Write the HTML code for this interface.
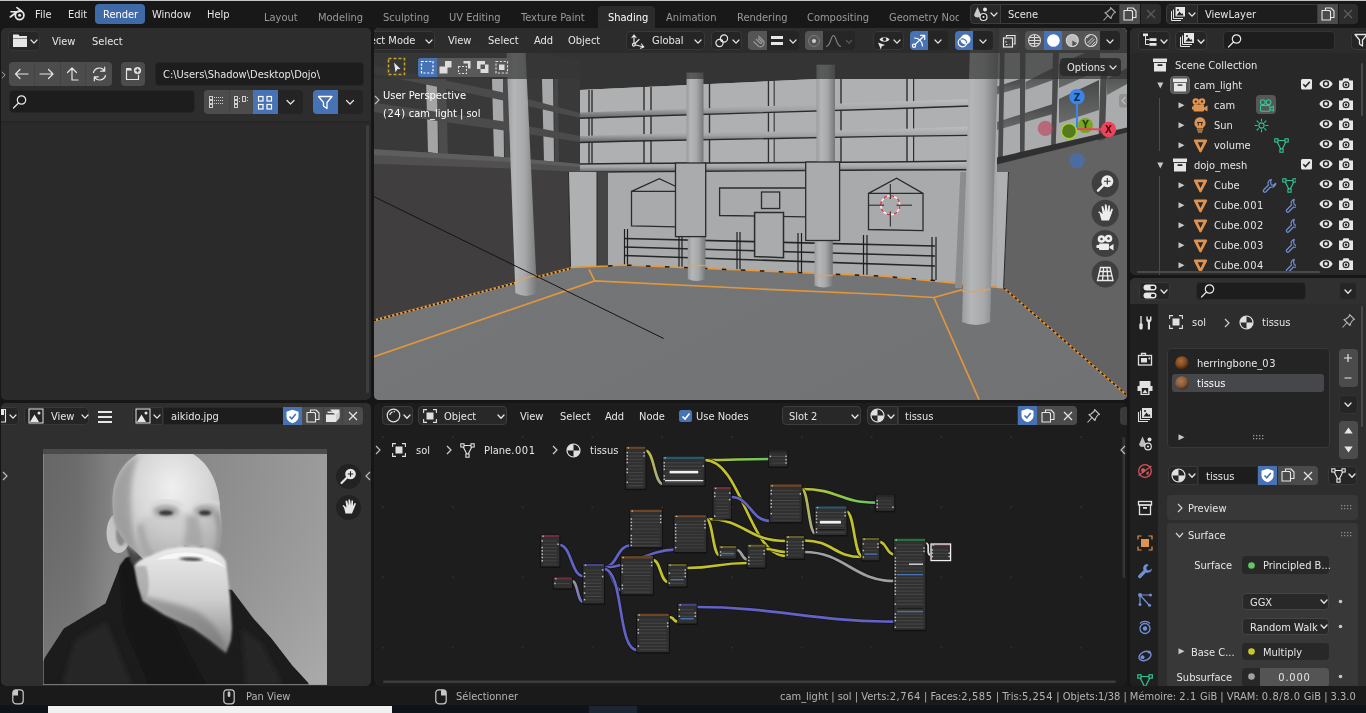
<!DOCTYPE html>
<html lang="en">
<head>
<meta charset="utf-8">
<title>Blender</title>
<style>
*{box-sizing:border-box;margin:0;padding:0}
html,body{width:1366px;height:713px;overflow:hidden;background:#161616}
body{position:relative;font-family:"DejaVu Sans Condensed","DejaVu Sans","Liberation Sans",sans-serif;font-stretch:condensed;font-size:11px;line-height:14px;color:#e6e6e6}
.a{position:absolute}
.t{position:absolute;white-space:nowrap;color:#e6e6e6;line-height:16px;height:16px;will-change:transform}
.dim{color:#9a9a9a}
.dg{letter-spacing:.58px}
.panel{position:absolute;overflow:hidden;border-radius:5px}
.btn{position:absolute;background:#545454;border-radius:3px}
.fld{position:absolute;background:#1d1d1d;border-radius:3px;border:1px solid #3d3d3d}
.dd{position:absolute;background:#282828;border-radius:3px;border:1px solid #3d3d3d}
.sel{background:#4772b3}
svg{position:absolute;overflow:visible}
.ic{fill:none;stroke:#e6e6e6;stroke-width:1.2;stroke-linecap:round;stroke-linejoin:round}
</style>
</head>
<body>
<!-- top bar -->
<div class="a" id="topbar" style="left:0;top:0;width:1366px;height:28px;background:#181818"></div>
<!-- file browser -->
<!-- 3d viewport -->
<!-- outliner -->
<!-- properties -->
<!-- image editor -->
<!-- node editor -->
<!-- status bar -->
<!-- taskbar strip -->
<!-- ============ TOP BAR ============ -->
<div class="a" style="left:0;top:0;width:1366px;height:1px;background:#c4c4c4"></div>
<svg width="16" height="16" viewBox="0 0 16 16" style="left:9px;top:6px"><g fill="none" stroke="#e6e6e6" stroke-linecap="round"><circle cx="10.6" cy="9.3" r="4.3" stroke-width="1.8"/><path d="M2,5.8H10M7.9,1.6L12.6,5.2M1.3,11L7,6.5" stroke-width="1.6"/></g><circle cx="10.6" cy="9.3" r="1.5" fill="#e6e6e6"/></svg>
<div class="t" style="left:35px;top:7px">File</div>
<div class="t" style="left:68px;top:7px">Edit</div>
<div class="a sel" style="left:95px;top:4px;width:50px;height:20px;border-radius:4px;background:#3f6aa8"></div>
<div class="t" style="left:102.5px;top:7px;color:#fff">Render</div>
<div class="t" style="left:152px;top:7px">Window</div>
<div class="t" style="left:207px;top:7px">Help</div>
<!-- workspace tabs -->
<div class="t dim" style="left:264px;top:10px">Layout</div>
<div class="t dim" style="left:318px;top:10px">Modeling</div>
<div class="t dim" style="left:383px;top:10px">Sculpting</div>
<div class="t dim" style="left:449px;top:10px">UV Editing</div>
<div class="t dim" style="left:521px;top:10px">Texture Paint</div>
<div class="a" style="left:598px;top:6px;width:57px;height:22px;background:#2b2b2b;border-radius:4px 4px 0 0"></div>
<div class="t" style="left:607.5px;top:10px;color:#fff">Shading</div>
<div class="t dim" style="left:666px;top:10px">Animation</div>
<div class="t dim" style="left:737px;top:10px">Rendering</div>
<div class="t dim" style="left:807px;top:10px">Compositing</div>
<div class="a" style="left:889px;top:10px;width:70px;height:16px;overflow:hidden"><div class="t dim" style="left:0;top:0">Geometry Nodes</div></div>
<!-- scene selector -->
<div class="dd" style="left:970px;top:4px;width:31px;height:20px;border-radius:4px 0 0 4px"></div>
<div class="fld" style="left:1000px;top:4px;width:120px;height:20px;border-radius:0"></div>
<div class="btn" style="left:1120px;top:4px;width:20px;height:20px;border-radius:0;background:#4b4b4b"></div>
<div class="btn" style="left:1140.5px;top:4px;width:20px;height:20px;border-radius:0 4px 4px 0;background:#2d2d2d"></div>
<div class="t" style="left:1008px;top:7px">Scene</div>
<!-- view layer selector -->
<div class="dd" style="left:1166px;top:4px;width:32px;height:20px;border-radius:4px 0 0 4px"></div>
<div class="fld" style="left:1197px;top:4px;width:121px;height:20px;border-radius:0"></div>
<div class="btn" style="left:1318px;top:4px;width:20px;height:20px;border-radius:0;background:#4b4b4b"></div>
<div class="btn" style="left:1338.5px;top:4px;width:19px;height:20px;border-radius:0 4px 4px 0;background:#2d2d2d"></div>
<div class="t" style="left:1205px;top:7px">ViewLayer</div>
<!-- topbar icons -->
<svg width="16" height="16" viewBox="0 0 16 16" style="left:973px;top:6px"><path d="M4.500,1L8,9A3.700,3.700 0 0 1 1,9Z" fill="#c9c9c9"/><circle cx="12" cy="3.500" r="2" fill="#e6e6e6"/><circle cx="10.500" cy="11" r="3.500" fill="#181818" stroke="#e6e6e6" stroke-width="1.200"/><circle cx="10.500" cy="11" r="1.100" fill="#e6e6e6"/></svg>
<svg width="8" height="6" viewBox="0 0 8 6" style="left:990px;top:11.500px"><path d="M1,1L4,4.2 7,1" class="ic" stroke-width="1.300"/></svg>
<svg width="15" height="16" viewBox="0 0 15 16" style="left:1101.500px;top:5.500px"><path d="M8.500,1.500L13.500,6.500 11.800,7 9.500,10.500 9,12.500 3,6.500 5,6 8.300,3.300Z M6,9.500L1.500,14.500" fill="none" stroke="#a8a8a8" stroke-width="1.100" stroke-linejoin="round"/></svg>
<svg width="14" height="14" viewBox="0 0 14 14" style="left:1123px;top:7px"><path d="M4.500,3.500V1H10L13,4V10.500H9.500M9.500,4.500V13H1V3.500H8.500Z" fill="none" stroke="#e6e6e6" stroke-width="1.100" stroke-linejoin="round"/></svg>
<svg width="10" height="10" viewBox="0 0 10 10" style="left:1145.500px;top:9px"><path d="M1,1L9,9M9,1L1,9" stroke="#5e5e5e" stroke-width="1.200" fill="none"/></svg>
<svg width="16" height="16" viewBox="0 0 16 16" style="left:1170px;top:6px"><g fill="none" stroke="#e6e6e6" stroke-width="1"><path d="M1.500,5V14.500H11M3.500,3.500V12.500H13"/></g><rect x="5.500" y="1" width="9.500" height="9.500" fill="#e6e6e6"/><path d="M6.500,9.500L9.500,5.500 11.500,8 12.500,7 13.500,9.500Z" fill="#252525"/><circle cx="8" cy="4" r="1" fill="#252525"/></svg>
<svg width="8" height="6" viewBox="0 0 8 6" style="left:1188px;top:11.500px"><path d="M1,1L4,4.2 7,1" class="ic" stroke-width="1.300"/></svg>
<svg width="14" height="14" viewBox="0 0 14 14" style="left:1321px;top:7px"><path d="M4.500,3.500V1H10L13,4V10.500H9.500M9.500,4.500V13H1V3.500H8.500Z" fill="none" stroke="#e6e6e6" stroke-width="1.100" stroke-linejoin="round"/></svg>
<svg width="10" height="10" viewBox="0 0 10 10" style="left:1343px;top:9px"><path d="M1,1L9,9M9,1L1,9" stroke="#5e5e5e" stroke-width="1.200" fill="none"/></svg>
<!-- ============ FILE BROWSER ============ -->
<div class="panel" id="fb" style="left:1px;top:28px;width:370px;height:372px;background:#2a2a2a">
<div class="a" style="left:0;top:0;width:370px;height:94px;background:#2d2d2d"></div>
<div class="a" style="left:0;top:93px;width:370px;height:2px;background:#262626"></div>
<!-- editor type -->
<div class="dd" style="left:7px;top:3px;width:32px;height:20px;border-radius:4px;background:#272727;border-color:#353535"></div>
<svg width="14" height="13" viewBox="0 0 14 13" style="left:12px;top:6px"><path d="M0,0.5H5.5L6.5,2H14V4H0Z M0,4.6H14V13H0Z" fill="#e6e6e6"/></svg>
<svg width="8" height="6" viewBox="0 0 8 6" style="left:29px;top:11px"><path d="M1,1L4,4.2 7,1" class="ic" stroke-width="1.3"/></svg>
<div class="t" style="left:51px;top:6px">View</div>
<div class="t" style="left:91px;top:6px">Select</div>
<!-- nav buttons -->
<div class="btn" style="left:8px;top:34px;width:103px;height:24px;border-radius:4px;background:#4c4c4c"></div>
<div class="a" style="left:33px;top:34px;width:1px;height:24px;background:#444"></div>
<div class="a" style="left:58.5px;top:34px;width:1px;height:24px;background:#444"></div>
<div class="a" style="left:84px;top:34px;width:1px;height:24px;background:#444"></div>
<svg width="103" height="24" viewBox="0 0 103 24" style="left:8px;top:34px"><g class="ic" stroke-width="1.3">
<path d="M19,12H6.5M11,7.5L6.5,12 11,16.500"/>
<path d="M31,12H44M39.500,7.500L44,12 39.500,16.500"/>
<path d="M69,18H63V6M58.500,10.500L63,6 67.500,10.500"/>
<path d="M84.500,10.500A6,6 0 0 1 95.500,9M95.700,5.200V9.200H91.700M96.500,13.500A6,6 0 0 1 85.500,15M85.300,18.800V14.800H89.300"/>
</g></svg>
<div class="btn" style="left:120px;top:34px;width:24px;height:24px;border-radius:4px;background:#4c4c4c"></div>
<svg width="24" height="24" viewBox="0 0 24 24" style="left:120px;top:34px"><path d="M5.500,8.500V17.500H17.500V13" class="ic" stroke-width="1.3"/><path d="M5,6H10L11,8.500H5Z" fill="#e6e6e6"/><circle cx="16.500" cy="8.500" r="3.600" fill="#e6e6e6"/><path d="M14.500,8.500H18.500M16.500,6.500V10.500" stroke="#4c4c4c" stroke-width="1.300"/></svg>
<!-- path -->
<div class="fld" style="left:154px;top:34px;width:209px;height:24px;border-radius:4px;border-color:#262626"></div>
<div class="t" style="left:161.5px;top:39px">C:\Users\Shadow\Desktop\Dojo\</div>
<!-- search -->
<div class="fld" style="left:8px;top:62px;width:186px;height:23px;border-radius:4px;border-color:#262626"></div>
<svg width="16" height="16" viewBox="0 0 16 16" style="left:11px;top:66px"><circle cx="9.500" cy="6" r="4.200" class="ic" stroke-width="1.300"/><path d="M6.500,9L1.500,14" class="ic" stroke-width="1.400"/></svg>
<!-- view modes -->
<div class="btn" style="left:203px;top:62px;width:74px;height:24px;border-radius:4px 0 0 4px;background:#4c4c4c"></div>
<div class="a" style="left:227.500px;top:62px;width:1px;height:24px;background:#444"></div>
<div class="a sel" style="left:252px;top:62px;width:25px;height:24px"></div>
<div class="a" style="left:277px;top:62px;width:25px;height:24px;background:#242424;border-radius:0 4px 4px 0"></div>
<svg width="100" height="24" viewBox="0 0 100 24" style="left:203px;top:62px">
<g fill="none" stroke="#d0d0d0" stroke-width="1"><rect x="5.500" y="6.500" width="3" height="3"/><rect x="5.500" y="10.500" width="3" height="3"/><rect x="5.500" y="14.500" width="3" height="3"/><rect x="30.500" y="6.500" width="3" height="3"/><rect x="30.500" y="10.500" width="3" height="3"/><rect x="30.500" y="14.500" width="3" height="3"/><rect x="38.500" y="6.500" width="3" height="5"/></g>
<g stroke="#d0d0d0" stroke-width="1" stroke-dasharray="1 1"><path d="M10,7.500H19M10,10.500H19M10,13.500H19M35,8.500H37M35,11.500H37M43,7.500H45M43,10.500H45"/></g>
<g fill="none" stroke="#fff" stroke-width="1.200"><rect x="54.500" y="6.500" width="4.500" height="4.500"/><rect x="63" y="6.500" width="4.500" height="4.500"/><rect x="54.500" y="14.500" width="4.500" height="4.500"/><rect x="63" y="14.500" width="4.500" height="4.500"/></g>
<path d="M83,10.500L86.500,14 90,10.500" class="ic" stroke-width="1.400"/>
</svg>
<!-- filter -->
<div class="a sel" style="left:312px;top:62px;width:24.500px;height:24px;border-radius:4px 0 0 4px"></div>
<div class="a" style="left:336.500px;top:62px;width:25.500px;height:24px;background:#242424;border-radius:0 4px 4px 0"></div>
<svg width="50" height="24" viewBox="0 0 50 24" style="left:312px;top:62px"><path d="M5.500,6.500H19L14,12.500V18.500L10.500,16V12.500Z" fill="none" stroke="#fff" stroke-width="1.300" stroke-linejoin="round"/><path d="M33.500,10.500L37,14 40.500,10.500" class="ic" stroke-width="1.400"/></svg>
<!-- scrollbar -->
<div class="a" style="left:365px;top:97px;width:3px;height:268px;background:#3e3e3e;border-radius:2px"></div>
<!-- region toggle -->
<svg width="5" height="8" viewBox="0 0 6 10" style="left:0px;top:43px"><path d="M1,1L5,5 1,9" fill="none" stroke="#aaa" stroke-width="1.200"/></svg>
</div>
<!-- ============ 3D VIEWPORT ============ -->
<div class="panel" id="vp" style="left:374px;top:28px;width:753px;height:372px;background:#747576">
<svg width="753" height="372" viewBox="374 28 753 372" style="left:0;top:0">
<defs>
<linearGradient id="pil" x1="0" x2="1" y1="0" y2="0"><stop offset="0" stop-color="#9a9c9d"/><stop offset=".25" stop-color="#b4b6b7"/><stop offset=".6" stop-color="#a6a8a9"/><stop offset="1" stop-color="#747677"/></linearGradient>
<linearGradient id="rail" x1="0" x2="0" y1="0" y2="1"><stop offset="0" stop-color="#bcbebf"/><stop offset=".55" stop-color="#a2a4a5"/><stop offset="1" stop-color="#5e6061"/></linearGradient>
<linearGradient id="flr" x1="0" x2="1" y1="0" y2="1"><stop offset="0" stop-color="#777879"/><stop offset="1" stop-color="#717273"/></linearGradient>
</defs>
<!-- floor -->
<rect x="374" y="28" width="753" height="372" fill="url(#flr)"/>
<!-- ceiling -->
<polygon points="374,28 1127,28 1127,80 816,80 580,90 374,60" fill="#343434"/>
<!-- left wall -->
<polygon points="374,28 580,90 580,172 570,268 374,320.5" fill="#403e3e"/>
<polygon points="374,28 580,60 580,172 374,150" fill="#3a3939"/>
<!-- left wall light strips -->
<polygon points="426,79 437,79 438,154 428,152" fill="#a2a4a5"/>
<polygon points="492,79 503,79 504,158 494,157" fill="#a6a8a9"/>
<polygon points="542,79 553,79 554,163 544,162" fill="#a6a8a9"/>
<!-- left wall posts -->
<polygon points="437.5,79 446,79 448,160 439,160" fill="#4c4c4c"/>
<polygon points="503,79 508,79 510,162 505,160" fill="#4a4a4a"/>
<polygon points="554,79 558,79 559,166 555,165" fill="#474747"/>
<!-- left wall beams -->
<polygon points="374,65.5 501,92 580,113 580,118 501,100 374,73.7" fill="#4b4b4b"/>
<polygon points="374,102.8 501,121 580,136 580,142 501,130 374,112" fill="#4b4b4b"/>
<polygon points="374,149.3 510,157.5 580,164 580,172 510,168.4 374,163.8" fill="#505050"/>
<polygon points="374,149.3 510,157.5 580,164 580,167 510,162 374,155" fill="#5e5e5e"/>
<!-- back wall -->
<polygon points="580,90 816,79 1010,79 1010,288 884,276.3 624,265 608,266 608,172 580,172" fill="#a8aaab"/>
<polygon points="580,90 816,79 970,79 970,161 884,162 624,163.5 580,164" fill="#aeb0b1"/>
<!-- back-wall window mullions -->
<g stroke="#2f2f2f" stroke-width="1.4" fill="none">
<path d="M589,90V165M592,90V165M644,87V164M651,87V164M709.5,84V163M768.5,81V163M774,81V163M841,79V162M907,79V161M913.5,79V161"/>
</g>
<g fill="#b4b6b7"><rect x="645" y="87" width="5" height="77"/><rect x="769.5" y="81" width="4" height="82"/><rect x="908" y="79" width="5" height="82"/></g>
<!-- rails -->
<polygon points="580,112.5 624,111 884,102 970,99 970,106 884,109 624,116.8 580,118.3" fill="url(#rail)"/>
<polygon points="580,136 624,134.4 884,129.5 970,126.6 970,135.4 884,136.4 624,141.3 580,142.5" fill="url(#rail)"/>
<polygon points="580,164 624,163.5 884,162 970,161 970,169.8 884,170 624,171.8 580,172.3" fill="url(#rail)"/>
<g stroke="#2a2a2a" stroke-width="1.400" fill="none"><path d="M580,118.3L624,116.8 884,109 970,106M580,142.5L624,141.3 884,136.4 970,135.4M580,172.3L624,171.8 884,170 970,169.8M580,164L624,163.5 884,162 970,161"/></g>
<!-- left near panel -->
<polygon points="568.5,172 597,172 597,266.5 570.5,267" fill="#aeb0b1"/>
<polygon points="597,172 608,172 608,266 597,266.5" fill="#454545"/>
<path d="M568.5,172L570.5,267M597,172V266.5" stroke="#2a2a2a" stroke-width="1" fill="none"/>
<!-- wall decorations -->
<g stroke="#2b2b2b" stroke-width="1.3" fill="none" stroke-linejoin="miter">
<path d="M631.5,191.4H676V226.8L631.5,225.8ZM631.5,191.4L659.3,178.7 676,186.5"/>
<path d="M719.6,188H806V216.8L719.6,215.5Z"/>
<rect x="761.5" y="192" width="18.2" height="16.5"/>
<path d="M868.5,193.4H923V230.7L868.5,229.5ZM868.5,193.4L896.6,178.3 923,193.4"/>
</g>
<!-- fence -->
<g stroke="#262626" stroke-width="1.6" fill="none">
<path d="M624,238.5L935,246M624,247L935,256M624,255.5L935,266"/>
</g>
<g stroke="#1e1e1e" stroke-width="1.2" fill="none">
<path d="M624.5,229V266M627.5,229V266M679,236V268M682,236V268M737,232V270.5M740,232V270.5M798,233V273M801.5,233V273M863.5,235V276M867,235V276M932,237V280M936,237V280"/>
</g>
<path d="M754.6,212.6H783.5V257.8L754.6,256.5Z" fill="#a9abac" stroke="#2b2b2b" stroke-width="1.5"/>
<!-- floor/wall boundary lines -->
<path d="M570.5,267.5L608,266 624,265 884,276.3 1004,288" stroke="#e8973a" stroke-width="1.500" fill="none"/>
<path d="M608,266L624,265 884,276.3 940,281" stroke="#1a1a1a" stroke-width="1.500" stroke-dasharray="4.500 14.500" fill="none"/>
<!-- back pillars + boxes -->
<rect x="686.5" y="72.6" width="17" height="92" fill="url(#pil)"/>
<rect x="816.5" y="64.7" width="18.5" height="99" fill="url(#pil)"/>
<path d="M687.8,236H705.5V279Q696.6,283 687.8,279Z" fill="url(#pil)"/>
<path d="M814.5,240H832.8V285.5Q823.6,289.5 814.5,285.5Z" fill="url(#pil)"/>
<path d="M687.8,265.5H705.5M814.5,275.5H832.8" stroke="#e8a05a" stroke-width="1.5" opacity=".8"/>
<rect x="675.5" y="163" width="30.2" height="73.6" fill="#a9abac" stroke="#2b2b2b" stroke-width="1.3"/>
<rect x="805.7" y="162" width="33.9" height="78.5" fill="#a9abac" stroke="#2b2b2b" stroke-width="1.3"/>
<!-- right wall -->
<polygon points="997,28 1127,28 1127,140 997,172" fill="#a9abac"/>
<polygon points="997,164 1127,132 1127,394.7 1003.6,287.7 1008.5,172 997,172" fill="#636363"/>
<polygon points="997,172 1008.5,172 1003.6,287.7 997,288" fill="#aeb0b1"/>
<path d="M1008.5,172L1003.6,287.7" stroke="#2a2a2a" stroke-width="1"/>
<!-- right wall beams -->
<defs><linearGradient id="bm" x1="0" x2="0" y1="0" y2="1"><stop offset="0" stop-color="#474848"/><stop offset="1" stop-color="#6a6b6b"/></linearGradient></defs>
<g fill="url(#bm)">
<polygon points="997,122 1053,104 1053,114 997,130"/>
<polygon points="1059,99 1099,80 1099,110 1059,123"/>
<polygon points="1107,79 1127,68 1127,84 1107,95"/>
<polygon points="997,86.500 1020,79 1020,88 997,94.600"/>
<polygon points="1025.500,82 1053,68 1053,80 1025.500,90"/>
<polygon points="1059,64 1085,53 1100,53 1100,70 1059,88"/>
</g>
<g fill="#4a4b4c">
<polygon points="1000,53 1004.6,53 1002.8,159 998,160"/>
<polygon points="1020,53 1025.5,53 1024.5,155.5 1020,156.6"/>
<polygon points="1053,53 1059,53 1055.6,149 1051,150"/>
<polygon points="1101,60 1107.6,60 1104.8,139.5 1098.5,141"/>
</g>
<polygon points="997,157.5 1127,127.5 1127,132.5 997,164.5" fill="#303030"/>
<!-- right wall floor boundary -->
<path d="M1003.6,287.7L1126.4,394.7" stroke="#e8912d" stroke-width="2"/>
<path d="M1003.6,287.7L1126.4,394.7" stroke="#1a1a1a" stroke-width="1.500" stroke-dasharray="2.500 2.500"/>
<!-- strip behind big pillar -->
<polygon points="960.4,172 966.3,172 962,288 955,288" fill="#8a8c8d"/>
<!-- floor orange lines -->
<g stroke="#e0963f" stroke-width="1.700" fill="none" stroke-linejoin="round">
<path d="M374,356.6L594.7,280.9 760,289 884,294.5 933.9,297.5 979,399.6"/>
<path d="M589,269.4L594.7,280.9M933.9,297.5L962.4,289.6"/>
</g>
<!-- left wall floor boundary -->
<path d="M374,320.5L570.4,268.4" stroke="#eaa040" stroke-width="2.2"/>
<path d="M374,320.5L570.4,268.4" stroke="#1a1a1a" stroke-width="1.8" stroke-dasharray="2 2.200"/>
<!-- pillar 1 -->
<path d="M506.5,53L525.6,53 537,293Q526,299 515.4,293Z" fill="url(#pil)"/>
<path d="M515,281L537,275" stroke="#e8a05a" stroke-width="1.5" opacity=".7"/>
<!-- black line -->
<path d="M374,196.7L663.7,338.5" stroke="#151515" stroke-width="1"/>
<!-- pillar C -->
<path d="M970.5,28L999,28 990,322Q976,328 962,322Z" fill="url(#pil)"/>
<path d="M962,291Q976,293 990,289" stroke="#e8a05a" stroke-width="1.5" opacity=".8" fill="none"/>
<!-- header overlays -->
<rect x="374" y="53" width="753" height="26" fill="#353535" opacity=".7"/>
<rect x="374" y="28" width="753" height="25" fill="#2b2b2b" opacity=".88"/>
</svg>
</div>
<!-- ============ 3D VIEWPORT HEADER / OVERLAYS ============ -->
<div class="a" id="vph" style="left:374px;top:28px;width:753px;height:372px;overflow:hidden;border-radius:5px">
<!-- mode dropdown (clipped) -->
<div class="dd" style="left:-40px;top:3px;width:101px;height:19px;border-radius:4px;background:#252525;border-color:#383838"></div>
<div class="t" style="left:-21.5px;top:5px">Object Mode</div>
<svg width="8" height="6" viewBox="0 0 8 6" style="left:51px;top:10.500px"><path d="M1,1L4,4.2 7,1" class="ic" stroke-width="1.3"/></svg>
<div class="t" style="left:74px;top:5px">View</div>
<div class="t" style="left:114px;top:5px">Select</div>
<div class="t" style="left:160px;top:5px">Add</div>
<div class="t" style="left:194px;top:5px">Object</div>
<!-- orientation -->
<div class="dd" style="left:251.5px;top:3px;width:79px;height:19px;border-radius:4px;background:#252525;border-color:#383838"></div>
<svg width="16" height="16" viewBox="0 0 16 16" style="left:256px;top:5px"><g class="ic" stroke-width="1.1"><path d="M4,2V11.500L13.500,14M2,4.500L4,2 6,4.500M11.500,11L13.800,14 10.500,15.200M4,11.500L9,6.500"/><circle cx="3.800" cy="11.800" r="1.400" fill="#252525"/></g></svg>
<div class="t" style="left:277.5px;top:5px">Global</div>
<svg width="8" height="6" viewBox="0 0 8 6" style="left:320px;top:10.500px"><path d="M1,1L4,4.2 7,1" class="ic" stroke-width="1.3"/></svg>
<!-- pivot -->
<div class="dd" style="left:337px;top:3px;width:31px;height:19px;border-radius:4px;background:#252525;border-color:#383838"></div>
<svg width="16" height="16" viewBox="0 0 16 16" style="left:340px;top:5px"><g class="ic" stroke-width="1.200"><circle cx="5.500" cy="10" r="3.600"/><circle cx="10" cy="5.500" r="3.600"/></g><circle cx="7.800" cy="7.800" r="1.300" fill="#e6e6e6"/></svg>
<svg width="8" height="6" viewBox="0 0 8 6" style="left:357.500px;top:10.500px"><path d="M1,1L4,4.2 7,1" class="ic" stroke-width="1.3"/></svg>
<!-- snap -->
<div class="a" style="left:374px;top:3px;width:18.500px;height:19px;background:#555;border-radius:4px 0 0 4px"></div>
<svg width="16" height="16" viewBox="0 0 16 16" style="left:375.500px;top:5px"><path d="M3.500,8.500L8.800,13.500A3.800,3.800 0 0 0 13.500,8L8.500,3M6,6L10.500,10.500A1.400,1.400 0 0 0 12,9L8,5" fill="none" stroke="#9a9a9a" stroke-width="1.100" stroke-linejoin="round"/></svg>
<div class="a" style="left:392.500px;top:3px;width:32px;height:19px;background:#252525;border-radius:0 4px 4px 0"></div>
<div class="a" style="left:397px;top:8px;width:12px;height:3px;background:#e6e6e6"></div>
<div class="a" style="left:397px;top:14px;width:12px;height:3px;background:#e6e6e6"></div>
<svg width="8" height="6" viewBox="0 0 8 6" style="left:414.500px;top:10.500px"><path d="M1,1L4,4.2 7,1" class="ic" stroke-width="1.3"/></svg>
<!-- proportional -->
<div class="a" style="left:430.800px;top:3px;width:18.500px;height:19px;background:#555;border-radius:4px 0 0 4px"></div>
<svg width="16" height="16" viewBox="0 0 16 16" style="left:432px;top:5px"><circle cx="8" cy="8" r="5.500" fill="none" stroke="#7c7c7c" stroke-width="1"/><circle cx="8" cy="8" r="2" fill="#cfcfcf"/></svg>
<div class="a" style="left:449.300px;top:3px;width:32px;height:19px;background:#262626;border-radius:0 4px 4px 0"></div>
<svg width="18" height="16" viewBox="0 0 18 16" style="left:451px;top:5px"><path d="M1,13.500C6,13.500 5.500,2.500 8.500,2.500S11,13.500 16,13.500" fill="none" stroke="#8a8a8a" stroke-width="1.100"/></svg>
<svg width="8" height="6" viewBox="0 0 8 6" style="left:470.500px;top:10.500px"><path d="M1,1L4,4.2 7,1" fill="none" stroke="#555" stroke-width="1.300"/></svg>
<!-- visibility -->
<div class="dd" style="left:498.500px;top:3px;width:31px;height:19px;border-radius:4px;background:#252525;border-color:#383838"></div>
<svg width="18" height="18" viewBox="0 0 18 18" style="left:500.500px;top:5px"><path d="M4.500,6.500C6.500,3.500 12.500,3.500 14.500,6.500C12.500,9.500 6.500,9.500 4.500,6.500Z" fill="#e6e6e6"/><circle cx="9.500" cy="6.300" r="1.700" fill="#252525"/><path d="M3,9.500L10,12 6.800,13.200 5.800,16.500Z" fill="#e6e6e6"/></svg>
<svg width="8" height="6" viewBox="0 0 8 6" style="left:519px;top:10.500px"><path d="M1,1L4,4.2 7,1" class="ic" stroke-width="1.3"/></svg>
<!-- gizmo -->
<div class="a sel" style="left:536px;top:3px;width:18.300px;height:19px;border-radius:4px 0 0 4px"></div>
<svg width="16" height="16" viewBox="0 0 16 16" style="left:537px;top:5px"><g fill="none" stroke="#fff" stroke-width="1.200" stroke-linecap="round" stroke-linejoin="round"><path d="M3,12.500L13.500,2.500M9.500,2.300H13.700V6.500M3.500,5C8,5 11.500,8.500 11.500,13"/><circle cx="3" cy="12.800" r="1.600" fill="#4772b3"/></g></svg>
<div class="a" style="left:554.300px;top:3px;width:19.700px;height:19px;background:#252525;border-radius:0 4px 4px 0"></div>
<svg width="8" height="6" viewBox="0 0 8 6" style="left:560px;top:10.500px"><path d="M1,1L4,4.2 7,1" class="ic" stroke-width="1.3"/></svg>
<!-- overlay -->
<div class="a sel" style="left:581px;top:3px;width:18.300px;height:19px;border-radius:4px 0 0 4px"></div>
<svg width="16" height="16" viewBox="0 0 16 16" style="left:582px;top:5px"><circle cx="9.500" cy="6.500" r="5" fill="#fff"/><circle cx="6.500" cy="9.500" r="4.300" fill="none" stroke="#fff" stroke-width="1.200"/><path d="M5,6.200A4.300,4.300 0 0 1 10.700,10.300" fill="none" stroke="#4772b3" stroke-width="1.200"/></svg>
<div class="a" style="left:599.300px;top:3px;width:19.700px;height:19px;background:#252525;border-radius:0 4px 4px 0"></div>
<svg width="8" height="6" viewBox="0 0 8 6" style="left:605px;top:10.500px"><path d="M1,1L4,4.2 7,1" class="ic" stroke-width="1.3"/></svg>
<!-- xray -->
<div class="a" style="left:626px;top:3px;width:18.500px;height:19px;background:#3f3f3f;border-radius:4px"></div>
<svg width="16" height="16" viewBox="0 0 16 16" style="left:627.200px;top:5px"><g fill="none" stroke="#e6e6e6" stroke-width="1.200"><path d="M5.500,4V2.500H14V11H12.500"/><rect x="2.500" y="5" width="9" height="9" fill="#3f3f3f"/></g><path d="M5,8V9.500M5,11.500H6.500M8.500,11.500H9" stroke="#e6e6e6" stroke-width="1.100"/></svg>
<!-- shading modes -->
<div class="a" style="left:650.700px;top:3px;width:75.500px;height:19px;background:#555;border-radius:4px 0 0 4px"></div>
<div class="a sel" style="left:670px;top:3px;width:18.300px;height:19px"></div>
<svg width="76" height="19" viewBox="0 0 76 19" style="left:650.700px;top:3px">
<g fill="none" stroke="#d8d8d8" stroke-width="1.100"><circle cx="9.500" cy="9.500" r="6"/><path d="M3.500,9.500H15.500M9.500,3.500V15.500M4.500,6.500H14.500M4.500,12.500H14.500"/></g>
<circle cx="28.400" cy="9.500" r="6.300" fill="#fff"/>
<circle cx="47.300" cy="9.500" r="6" fill="none" stroke="#d8d8d8" stroke-width="1.100"/><path d="M47.300,3.500A6,6 0 0 0 47.300,15.500L47.300,9.500 52.500,12.500A6,6 0 0 0 47.300,3.500Z" fill="#cfcfcf" opacity=".85"/>
<circle cx="66" cy="9.500" r="6" fill="none" stroke="#d8d8d8" stroke-width="1.100"/><path d="M62,7A4.500,4.500 0 0 1 65,4.500M69.500,8L64,13.500M70.500,10.500L66.500,14.500M68,6.500L62.500,12" fill="none" stroke="#d8d8d8" stroke-width="1"/>
</g></svg>
<div class="a" style="left:726.200px;top:3px;width:20px;height:19px;background:#252525;border-radius:0 4px 4px 0"></div>
<svg width="8" height="6" viewBox="0 0 8 6" style="left:732px;top:10.500px"><path d="M1,1L4,4.2 7,1" class="ic" stroke-width="1.3"/></svg>
<!-- tool settings row -->
<svg width="20" height="20" viewBox="0 0 20 20" style="left:13px;top:29px"><rect x="1.500" y="1.500" width="16" height="16" fill="none" stroke="#c9a227" stroke-width="1.600" stroke-dasharray="3 2"/><path d="M7,5.500L13.500,12 10.200,12.300 8.500,15.500Z" fill="#e6e6e6"/></svg>
<div class="a" style="left:44px;top:30px;width:93.300px;height:18.500px;background:#595959;border-radius:3px"></div>
<div class="a sel" style="left:44px;top:30px;width:18.600px;height:18.500px;border-radius:3px 0 0 3px"></div>
<svg width="94" height="19" viewBox="0 0 94 19" style="left:44px;top:30px">
<rect x="3.500" y="3.500" width="11.500" height="11.500" fill="none" stroke="#fff" stroke-width="1.200" stroke-dasharray="2.200 1.600"/>
<path d="M27,3H33.500V9.500H29.500V15.500H21.500V8.500H27Z" fill="#dcdcdc"/>
<rect x="40.500" y="8.500" width="8" height="7" fill="none" stroke="#dcdcdc" stroke-width="1.100" stroke-dasharray="2 1.500"/><path d="M45.500,3H52.500V10.500H50V5.500H45.500Z" fill="#dcdcdc"/>
<path d="M59,3H67V11H59Z" fill="#dcdcdc"/><rect x="62.500" y="6.500" width="8" height="8.500" fill="#dcdcdc"/><rect x="62.500" y="6.500" width="4.500" height="4.500" fill="#595959"/>
<rect x="78" y="3.500" width="11.500" height="11.500" fill="none" stroke="#dcdcdc" stroke-width="1.100" stroke-dasharray="2.200 1.600"/><rect x="81" y="6.500" width="5.500" height="5.500" fill="#dcdcdc"/>
</svg>
<g></g>
<!-- text overlay -->
<div class="t" style="left:9px;top:60px;color:#fff">User Perspective</div>
<div class="t" style="left:9px;top:78px;color:#fff"><span class="dg">(24)</span> cam_light | sol</div>
<svg width="6" height="10" viewBox="0 0 6 10" style="left:0px;top:67px"><path d="M1,1L5,5 1,9" fill="none" stroke="#bbb" stroke-width="1.200"/></svg>
<!-- options -->
<div class="a" style="left:685.500px;top:30px;width:61px;height:18px;background:#2a2a2a;border-radius:4px;opacity:.92"></div>
<div class="t" style="left:693px;top:32px">Options</div>
<svg width="8" height="6" viewBox="0 0 8 6" style="left:735px;top:37px"><path d="M1,1L4,4.2 7,1" class="ic" stroke-width="1.3"/></svg>
<!-- gizmo, nav buttons, cursor (page coords via viewBox) -->
<svg width="753" height="372" viewBox="374 28 753 372" style="left:0;top:0">
<!-- 3d cursor -->
<g fill="none">
<circle cx="890.300" cy="205.200" r="9.500" stroke="#f2f2f2" stroke-width="1.600"/>
<circle cx="890.300" cy="205.200" r="9.500" stroke="#e0344a" stroke-width="1.600" stroke-dasharray="3.700 3.760"/>
<path d="M869,205.200H884M896.500,205.200H912M890.300,184V199M890.300,211.500V226.500" stroke="#222" stroke-width="1"/>
</g>
<!-- gizmo -->
<circle cx="1045.400" cy="128.400" r="7.700" fill="#c2415a" opacity=".62"/>
<circle cx="1077" cy="160.600" r="7.700" fill="#3f74c8" opacity=".62"/>
<circle cx="1085.400" cy="125.600" r="7.500" fill="#76a81f"/>
<path d="M1077,129V97" stroke="#3a86e8" stroke-width="2"/>
<path d="M1077,129L1108.500,129.500" stroke="#f0425a" stroke-width="2"/>
<circle cx="1069" cy="131.200" r="7.600" fill="#567a1d" stroke="#9fd62c" stroke-width="1.500"/>
<circle cx="1077" cy="96.800" r="7.700" fill="#3a86e8"/>
<circle cx="1108.500" cy="129.500" r="7.700" fill="#f0425a"/>
<g font-family="DejaVu Sans, Liberation Sans, sans-serif" font-size="10" font-weight="bold" fill="#1a1a1a" text-anchor="middle">
<text x="1077" y="100.500" fill="#0d2a55">Z</text><text x="1108.600" y="133.200" fill="#4a0d18">X</text><text x="1085.600" y="127.500" fill="#2c4208">Y</text></g>
<!-- sidebar toggle -->
<rect x="1119" y="94" width="10" height="13.500" rx="3" fill="#8a8a8a" opacity=".75"/>
<path d="M1125.500,97L1122,100.700 1125.500,104.400" fill="none" stroke="#bdbdbd" stroke-width="1.200"/>
<!-- nav buttons -->
<g fill="#3b3b3b" opacity=".88"><circle cx="1105.200" cy="183.800" r="13.500"/><circle cx="1105.200" cy="213.300" r="13.500"/><circle cx="1105.200" cy="243.400" r="13.500"/><circle cx="1105.200" cy="274" r="13.500"/></g>
<!-- zoom -->
<circle cx="1107.300" cy="181.300" r="6" fill="#ececec"/><path d="M1107.300,178V184.600M1104,181.300H1110.600" stroke="#333" stroke-width="1.100"/><path d="M1103,185.700L1098,190.700" stroke="#ececec" stroke-width="2.400" stroke-linecap="round"/>
<!-- hand -->
<path d="M1099.500,213L1101.500,220.500H1109L1111.500,214 1113,209 1111.500,208.500 1109.800,212.500 1110,205.500 1108.300,205.500 1107.800,211.500 1106.500,204.500 1104.800,204.500 1105,211.500 1103,206 1101.400,206.500 1102.700,214 1099.300,211.300 1098,212.500Z" fill="#ececec"/>
<!-- camera -->
<g fill="#ececec"><circle cx="1101.500" cy="239" r="3.800"/><circle cx="1108.500" cy="238.500" r="3.800"/><rect x="1099" y="243.500" width="10" height="6.500" rx="1"/><path d="M1109.500,246.500L1113.500,244V250.500L1109.500,248Z"/><rect x="1096.500" y="245" width="2.500" height="3"/></g><circle cx="1101.500" cy="239" r="1.200" fill="#3b3b3b"/><circle cx="1108.500" cy="238.500" r="1.200" fill="#3b3b3b"/>
<!-- grid -->
<g fill="none" stroke="#ececec" stroke-width="1.300"><path d="M1100.500,267.500H1110L1113,280.500H1097.500Z M1099.500,271.500H1111M1098.500,275.800H1112M1103.600,267.500L1102.500,280.500M1106.900,267.500L1108,280.500"/></g>
</svg>
</div>
<!-- ============ OUTLINER ============ -->
<div class="panel" id="ol" style="left:1130px;top:28px;width:236px;height:247px;background:#282828;border-radius:5px 0 0 5px">
<div class="a" style="left:0;top:0;width:236px;height:25px;background:#2b2b2b"></div>
<div class="dd" style="left:8px;top:3px;width:32px;height:19px;border-radius:4px;background:#252525;border-color:#383838"></div>
<svg width="16" height="16" viewBox="0 0 16 16" style="left:12px;top:4px"><g fill="#e6e6e6"><rect x="1" y="1.5" width="5" height="2.6"/><rect x="7.5" y="6.2" width="7" height="2.8"/><rect x="7.5" y="11" width="7" height="2.8"/></g><path d="M3.500,4V12.500H7.500M3.500,7.600H7.500" fill="none" stroke="#e6e6e6" stroke-width="1"/></svg>
<svg width="8" height="6" viewBox="0 0 8 6" style="left:30px;top:10.5px"><path d="M1,1L4,4.2 7,1" fill="none" stroke="#e6e6e6" stroke-width="1.3" stroke-linecap="round" stroke-linejoin="round"/></svg>
<div class="dd" style="left:45px;top:3px;width:32px;height:19px;border-radius:4px;background:#252525;border-color:#383838"></div>
<svg width="16" height="16" viewBox="0 0 16 16" style="left:49px;top:4px"><g fill="none" stroke="#e6e6e6" stroke-width="1"><path d="M1.500,5V14.500H11M3.500,3.500V12.500H13"/><rect x="5.500" y="1.500" width="9" height="9" fill="#e6e6e6"/></g><path d="M6.500,9.500L9.500,5.500 11.500,8 12.500,7 13.500,9.500Z" fill="#252525"/><circle cx="8" cy="4" r="1" fill="#252525"/></svg>
<svg width="8" height="6" viewBox="0 0 8 6" style="left:67px;top:10.5px"><path d="M1,1L4,4.2 7,1" fill="none" stroke="#e6e6e6" stroke-width="1.3" stroke-linecap="round" stroke-linejoin="round"/></svg>
<div class="fld" style="left:93px;top:3px;width:112px;height:19px;border-radius:4px;border-color:#333"></div>
<svg width="16" height="16" viewBox="0 0 16 16" style="left:97px;top:5px"><circle cx="9.500" cy="6" r="4.200" class="ic" stroke-width="1.300"/><path d="M6.500,9L1.500,14" class="ic" stroke-width="1.400"/></svg>
<div class="dd" style="left:220.5px;top:3px;width:32px;height:19px;border-radius:4px;background:#252525;border-color:#383838"></div>
<svg width="14" height="16" viewBox="0 0 14 16" style="left:224px;top:5px"><path d="M1,1.500H13L8.500,7V13L5.500,11V7Z" fill="none" stroke="#e6e6e6" stroke-width="1.300" stroke-linejoin="round"/></svg>
<div class="a" style="left:29px;top:70px;width:1px;height:53px;background:#4d4d4d"></div>
<div class="a" style="left:29px;top:148px;width:1px;height:99px;background:#4d4d4d"></div>
<svg width="14" height="14" viewBox="0 0 14 14" style="left:23px;top:30px"><rect x="0" y="0.500" width="14" height="3.600" fill="#e6e6e6"/><rect x="1" y="5" width="12" height="8.500" fill="#e6e6e6"/><rect x="4.500" y="6.300" width="5" height="1.800" rx=".5" fill="#282828"/></svg>
<div class="t" style="left:44.5px;top:29.5px">Scene Collection</div>
<svg width="7" height="7" viewBox="0 0 7 7" style="left:26.5px;top:54px"><path d="M0.300,0.500H6.300L3.300,6.500Z" fill="#c8c8c8"/></svg>
<div class="a" style="left:40px;top:47.5px;width:20px;height:18.500px;background:#575757;border-radius:4px;border:1px solid #6a6a6a"></div>
<svg width="14" height="14" viewBox="0 0 14 14" style="left:43px;top:50px"><rect x="0" y="0.500" width="14" height="3.600" fill="#e6e6e6"/><rect x="1" y="5" width="12" height="8.500" fill="#e6e6e6"/><rect x="4.500" y="6.300" width="5" height="1.800" rx=".5" fill="#575757"/></svg>
<div class="t" style="left:64.29999999999995px;top:49.5px">cam_light</div>
<svg width="11" height="11" viewBox="0 0 11 11" style="left:170.5px;top:50.5px"><rect x="0" y="0" width="11" height="10.500" rx="1.500" fill="#e9e9e9"/><path d="M2.300,5.300L4.500,7.600 8.800,2.800" fill="none" stroke="#222" stroke-width="1.500"/></svg>
<svg width="14" height="10" viewBox="0 0 14 10" style="left:188.5px;top:51px"><path d="M0.300,5C3,-.6 11,-.6 13.700,5C11,10.600 3,10.600 0.300,5Z" fill="#e6e6e6"/><circle cx="7" cy="4.800" r="3.200" fill="#282828"/><circle cx="7" cy="4.800" r="1.700" fill="#e6e6e6"/></svg>
<svg width="14" height="12" viewBox="0 0 14 12" style="left:208.5px;top:50px"><path d="M0,2.500H3.500L4.500,0.300H9.500L10.500,2.500H14V12H0Z" fill="#e6e6e6"/><circle cx="7" cy="6.800" r="3.500" fill="#282828"/><circle cx="7" cy="6.800" r="2.300" fill="#e6e6e6"/><circle cx="7" cy="6.800" r="1.200" fill="#282828"/></svg>
<svg width="7" height="7" viewBox="0 0 7 7" style="left:47.5px;top:73.5px"><path d="M0.500,0.300V6.300L6.500,3.300Z" fill="#c8c8c8"/></svg>
<svg width="16" height="14" viewBox="0 0 16 14" style="left:62px;top:70px"><circle cx="3.800" cy="3.600" r="3.300" fill="#e0934e"/><circle cx="10" cy="3.600" r="3.300" fill="#e0934e"/><circle cx="3.800" cy="3.600" r="1.100" fill="#282828"/><circle cx="10" cy="3.600" r="1.100" fill="#282828"/><rect x="1.500" y="6.500" width="10.500" height="7" rx="1" fill="#e0934e"/><path d="M12,9.500L15.500,7.500V13.500L12,11.500Z" fill="#e0934e"/><rect x="0" y="8.500" width="2" height="3" fill="#e0934e"/></svg>
<div class="t" style="left:83.5px;top:69.5px">cam</div>
<div class="a" style="left:125.5px;top:67.0px;width:20px;height:19px;background:#575757;border-radius:4px"></div><svg width="15" height="13" viewBox="0 0 15 13" style="left:128.5px;top:70.5px"><g fill="none" stroke="#33c594" stroke-width="1.100"><circle cx="3.800" cy="3.200" r="2.400"/><circle cx="9.500" cy="3.200" r="2.400"/><rect x="1.500" y="6.500" width="9.500" height="5.800" rx="1"/><path d="M11,9L14.300,7.300V12L11,10.500"/></g></svg>
<svg width="14" height="10" viewBox="0 0 14 10" style="left:188.5px;top:71px"><path d="M0.300,5C3,-.6 11,-.6 13.700,5C11,10.600 3,10.600 0.300,5Z" fill="#e6e6e6"/><circle cx="7" cy="4.800" r="3.200" fill="#282828"/><circle cx="7" cy="4.800" r="1.700" fill="#e6e6e6"/></svg>
<svg width="14" height="12" viewBox="0 0 14 12" style="left:208.5px;top:70px"><path d="M0,2.500H3.500L4.500,0.300H9.500L10.500,2.500H14V12H0Z" fill="#e6e6e6"/><circle cx="7" cy="6.800" r="3.500" fill="#282828"/><circle cx="7" cy="6.800" r="2.300" fill="#e6e6e6"/><circle cx="7" cy="6.800" r="1.200" fill="#282828"/></svg>
<svg width="7" height="7" viewBox="0 0 7 7" style="left:47.5px;top:93.5px"><path d="M0.500,0.300V6.300L6.500,3.300Z" fill="#c8c8c8"/></svg>
<svg width="14" height="16" viewBox="0 0 14 16" style="left:63px;top:89px"><path d="M7,0.300A5.600,5.600 0 0 1 10.300,10.400V11.500H3.700V10.400A5.600,5.600 0 0 1 7,0.300Z" fill="#e0934e"/><path d="M4.200,5.500H9.800M5.300,5.500V8.500M8.700,5.500V8.500" stroke="#282828" stroke-width="1" fill="none"/><rect x="4" y="12.300" width="6" height="1.300" fill="#e0934e"/><rect x="4.800" y="14.300" width="4.400" height="1.300" fill="#e0934e"/></svg>
<div class="t" style="left:83.5px;top:89.5px">Sun</div>
<svg width="15" height="15" viewBox="0 0 15 15" style="left:124px;top:89.5px"><g fill="none" stroke="#33c594" stroke-width="1.100"><circle cx="7.500" cy="7.500" r="2.600"/><path d="M11.4,7.5L14.3,7.5M10.3,10.3L12.3,12.3M7.5,11.4L7.5,14.3M4.7,10.3L2.7,12.3M3.6,7.5L0.7,7.5M4.7,4.7L2.7,2.7M7.5,3.6L7.5,0.7M10.3,4.7L12.3,2.7"/></g></svg>
<svg width="14" height="10" viewBox="0 0 14 10" style="left:188.5px;top:91px"><path d="M0.300,5C3,-.6 11,-.6 13.700,5C11,10.600 3,10.600 0.300,5Z" fill="#e6e6e6"/><circle cx="7" cy="4.800" r="3.200" fill="#282828"/><circle cx="7" cy="4.800" r="1.700" fill="#e6e6e6"/></svg>
<svg width="14" height="12" viewBox="0 0 14 12" style="left:208.5px;top:90px"><path d="M0,2.500H3.500L4.500,0.300H9.500L10.500,2.500H14V12H0Z" fill="#e6e6e6"/><circle cx="7" cy="6.800" r="3.500" fill="#282828"/><circle cx="7" cy="6.800" r="2.300" fill="#e6e6e6"/><circle cx="7" cy="6.800" r="1.200" fill="#282828"/></svg>
<svg width="7" height="7" viewBox="0 0 7 7" style="left:47.5px;top:113.5px"><path d="M0.500,0.300V6.300L6.500,3.300Z" fill="#c8c8c8"/></svg>
<svg width="15" height="14" viewBox="0 0 15 14" style="left:62.5px;top:110.5px"><path d="M1.800,0.500H13.200Q14.800,0.700 14,2.200L8.600,12.800Q7.500,14.300 6.400,12.800L1,2.200Q0.200,0.700 1.800,0.500Z" fill="#e0934e"/><path d="M4.700,3.300H10.300L7.500,9Z" fill="#282828"/></svg>
<div class="t" style="left:83.5px;top:109.5px">volume</div>
<svg width="15" height="15" viewBox="0 0 15 15" style="left:143.5px;top:109.5px"><g fill="none" stroke="#33c594" stroke-width="1.100"><path d="M2.500,2.500H12.500L7.500,12.500Z"/><rect x="0.800" y="0.800" width="3.200" height="3.200" fill="#282828"/><rect x="11" y="0.800" width="3.200" height="3.200" fill="#282828"/><rect x="5.900" y="11" width="3.200" height="3.200" fill="#282828"/></g></svg>
<svg width="14" height="10" viewBox="0 0 14 10" style="left:188.5px;top:111px"><path d="M0.300,5C3,-.6 11,-.6 13.700,5C11,10.600 3,10.600 0.300,5Z" fill="#e6e6e6"/><circle cx="7" cy="4.800" r="3.200" fill="#282828"/><circle cx="7" cy="4.800" r="1.700" fill="#e6e6e6"/></svg>
<svg width="14" height="12" viewBox="0 0 14 12" style="left:208.5px;top:110px"><path d="M0,2.500H3.500L4.500,0.300H9.500L10.500,2.500H14V12H0Z" fill="#e6e6e6"/><circle cx="7" cy="6.800" r="3.500" fill="#282828"/><circle cx="7" cy="6.800" r="2.300" fill="#e6e6e6"/><circle cx="7" cy="6.800" r="1.200" fill="#282828"/></svg>
<svg width="7" height="7" viewBox="0 0 7 7" style="left:26.5px;top:134px"><path d="M0.300,0.500H6.300L3.300,6.500Z" fill="#c8c8c8"/></svg>
<svg width="14" height="14" viewBox="0 0 14 14" style="left:43px;top:130px"><rect x="0" y="0.500" width="14" height="3.600" fill="#e6e6e6"/><rect x="1" y="5" width="12" height="8.500" fill="#e6e6e6"/><rect x="4.500" y="6.300" width="5" height="1.800" rx=".5" fill="#282828"/></svg>
<div class="t" style="left:64.29999999999995px;top:129.5px">dojo_mesh</div>
<svg width="11" height="11" viewBox="0 0 11 11" style="left:170.5px;top:130.5px"><rect x="0" y="0" width="11" height="10.500" rx="1.500" fill="#e9e9e9"/><path d="M2.300,5.300L4.500,7.600 8.800,2.800" fill="none" stroke="#222" stroke-width="1.500"/></svg>
<svg width="14" height="10" viewBox="0 0 14 10" style="left:188.5px;top:131px"><path d="M0.300,5C3,-.6 11,-.6 13.700,5C11,10.600 3,10.600 0.300,5Z" fill="#e6e6e6"/><circle cx="7" cy="4.800" r="3.200" fill="#282828"/><circle cx="7" cy="4.800" r="1.700" fill="#e6e6e6"/></svg>
<svg width="14" height="12" viewBox="0 0 14 12" style="left:208.5px;top:130px"><path d="M0,2.500H3.500L4.500,0.300H9.500L10.500,2.500H14V12H0Z" fill="#e6e6e6"/><circle cx="7" cy="6.800" r="3.500" fill="#282828"/><circle cx="7" cy="6.800" r="2.300" fill="#e6e6e6"/><circle cx="7" cy="6.800" r="1.200" fill="#282828"/></svg>
<svg width="7" height="7" viewBox="0 0 7 7" style="left:47.5px;top:153.5px"><path d="M0.500,0.300V6.300L6.500,3.300Z" fill="#c8c8c8"/></svg>
<svg width="15" height="14" viewBox="0 0 15 14" style="left:62.5px;top:150.5px"><path d="M1.800,0.500H13.200Q14.800,0.700 14,2.200L8.600,12.800Q7.500,14.300 6.400,12.800L1,2.200Q0.200,0.700 1.800,0.500Z" fill="#e0934e"/><path d="M4.700,3.300H10.300L7.500,9Z" fill="#282828"/></svg>
<div class="t" style="left:83.5px;top:149.5px">Cube</div>
<svg width="15" height="15" viewBox="0 0 15 15" style="left:131.5px;top:149.5px"><path d="M9.200,1.300A4,4 0 0 0 6.500,7L1.500,12A1.500,1.500 0 0 0 3.600,14L8.500,9A4,4 0 0 0 13.800,5.300L11.500,7.300 9.300,6.800 8.600,4.500Z" fill="none" stroke="#6f8fd6" stroke-width="1.200" stroke-linejoin="round"/></svg>
<svg width="15" height="15" viewBox="0 0 15 15" style="left:151.5px;top:149.5px"><g fill="none" stroke="#33c594" stroke-width="1.100"><path d="M2.500,2.500H12.500L7.500,12.500Z"/><rect x="0.800" y="0.800" width="3.200" height="3.200" fill="#282828"/><rect x="11" y="0.800" width="3.200" height="3.200" fill="#282828"/><rect x="5.900" y="11" width="3.200" height="3.200" fill="#282828"/></g></svg>
<svg width="14" height="10" viewBox="0 0 14 10" style="left:188.5px;top:151px"><path d="M0.300,5C3,-.6 11,-.6 13.700,5C11,10.600 3,10.600 0.300,5Z" fill="#e6e6e6"/><circle cx="7" cy="4.800" r="3.200" fill="#282828"/><circle cx="7" cy="4.800" r="1.700" fill="#e6e6e6"/></svg>
<svg width="14" height="12" viewBox="0 0 14 12" style="left:208.5px;top:150px"><path d="M0,2.500H3.500L4.500,0.300H9.500L10.500,2.500H14V12H0Z" fill="#e6e6e6"/><circle cx="7" cy="6.800" r="3.500" fill="#282828"/><circle cx="7" cy="6.800" r="2.300" fill="#e6e6e6"/><circle cx="7" cy="6.800" r="1.200" fill="#282828"/></svg>
<svg width="7" height="7" viewBox="0 0 7 7" style="left:47.5px;top:173.5px"><path d="M0.500,0.300V6.300L6.500,3.300Z" fill="#c8c8c8"/></svg>
<svg width="15" height="14" viewBox="0 0 15 14" style="left:62.5px;top:170.5px"><path d="M1.800,0.500H13.200Q14.800,0.700 14,2.200L8.600,12.800Q7.500,14.300 6.400,12.800L1,2.200Q0.200,0.700 1.800,0.500Z" fill="#e0934e"/><path d="M4.700,3.300H10.300L7.500,9Z" fill="#282828"/></svg>
<div class="t" style="left:83.5px;top:169.5px">Cube<span class="dg">.001</span></div>
<svg width="15" height="15" viewBox="0 0 15 15" style="left:155px;top:169.5px"><path d="M9.200,1.300A4,4 0 0 0 6.500,7L1.500,12A1.500,1.500 0 0 0 3.600,14L8.500,9A4,4 0 0 0 13.800,5.300L11.500,7.300 9.300,6.800 8.600,4.500Z" fill="none" stroke="#6f8fd6" stroke-width="1.200" stroke-linejoin="round"/></svg>
<svg width="14" height="10" viewBox="0 0 14 10" style="left:188.5px;top:171px"><path d="M0.300,5C3,-.6 11,-.6 13.700,5C11,10.600 3,10.600 0.300,5Z" fill="#e6e6e6"/><circle cx="7" cy="4.800" r="3.200" fill="#282828"/><circle cx="7" cy="4.800" r="1.700" fill="#e6e6e6"/></svg>
<svg width="14" height="12" viewBox="0 0 14 12" style="left:208.5px;top:170px"><path d="M0,2.500H3.500L4.500,0.300H9.500L10.500,2.500H14V12H0Z" fill="#e6e6e6"/><circle cx="7" cy="6.800" r="3.500" fill="#282828"/><circle cx="7" cy="6.800" r="2.300" fill="#e6e6e6"/><circle cx="7" cy="6.800" r="1.200" fill="#282828"/></svg>
<svg width="7" height="7" viewBox="0 0 7 7" style="left:47.5px;top:193.5px"><path d="M0.500,0.300V6.300L6.500,3.300Z" fill="#c8c8c8"/></svg>
<svg width="15" height="14" viewBox="0 0 15 14" style="left:62.5px;top:190.5px"><path d="M1.800,0.500H13.200Q14.800,0.700 14,2.200L8.600,12.800Q7.500,14.300 6.400,12.800L1,2.200Q0.200,0.700 1.800,0.500Z" fill="#e0934e"/><path d="M4.700,3.300H10.300L7.500,9Z" fill="#282828"/></svg>
<div class="t" style="left:83.5px;top:189.5px">Cube<span class="dg">.002</span></div>
<svg width="15" height="15" viewBox="0 0 15 15" style="left:155px;top:189.5px"><path d="M9.200,1.300A4,4 0 0 0 6.500,7L1.500,12A1.500,1.500 0 0 0 3.600,14L8.500,9A4,4 0 0 0 13.800,5.300L11.500,7.300 9.300,6.800 8.600,4.500Z" fill="none" stroke="#6f8fd6" stroke-width="1.200" stroke-linejoin="round"/></svg>
<svg width="14" height="10" viewBox="0 0 14 10" style="left:188.5px;top:191px"><path d="M0.300,5C3,-.6 11,-.6 13.700,5C11,10.600 3,10.600 0.300,5Z" fill="#e6e6e6"/><circle cx="7" cy="4.800" r="3.200" fill="#282828"/><circle cx="7" cy="4.800" r="1.700" fill="#e6e6e6"/></svg>
<svg width="14" height="12" viewBox="0 0 14 12" style="left:208.5px;top:190px"><path d="M0,2.500H3.500L4.500,0.300H9.500L10.500,2.500H14V12H0Z" fill="#e6e6e6"/><circle cx="7" cy="6.800" r="3.500" fill="#282828"/><circle cx="7" cy="6.800" r="2.300" fill="#e6e6e6"/><circle cx="7" cy="6.800" r="1.200" fill="#282828"/></svg>
<svg width="7" height="7" viewBox="0 0 7 7" style="left:47.5px;top:213.5px"><path d="M0.500,0.300V6.300L6.500,3.300Z" fill="#c8c8c8"/></svg>
<svg width="15" height="14" viewBox="0 0 15 14" style="left:62.5px;top:210.5px"><path d="M1.800,0.500H13.200Q14.800,0.700 14,2.200L8.600,12.800Q7.500,14.300 6.400,12.800L1,2.200Q0.200,0.700 1.800,0.500Z" fill="#e0934e"/><path d="M4.700,3.300H10.300L7.500,9Z" fill="#282828"/></svg>
<div class="t" style="left:83.5px;top:209.5px">Cube<span class="dg">.003</span></div>
<svg width="15" height="15" viewBox="0 0 15 15" style="left:155px;top:209.5px"><path d="M9.200,1.300A4,4 0 0 0 6.500,7L1.500,12A1.500,1.500 0 0 0 3.600,14L8.500,9A4,4 0 0 0 13.800,5.300L11.500,7.300 9.300,6.800 8.600,4.500Z" fill="none" stroke="#6f8fd6" stroke-width="1.200" stroke-linejoin="round"/></svg>
<svg width="14" height="10" viewBox="0 0 14 10" style="left:188.5px;top:211px"><path d="M0.300,5C3,-.6 11,-.6 13.700,5C11,10.600 3,10.600 0.300,5Z" fill="#e6e6e6"/><circle cx="7" cy="4.800" r="3.200" fill="#282828"/><circle cx="7" cy="4.800" r="1.700" fill="#e6e6e6"/></svg>
<svg width="14" height="12" viewBox="0 0 14 12" style="left:208.5px;top:210px"><path d="M0,2.500H3.500L4.500,0.300H9.500L10.500,2.500H14V12H0Z" fill="#e6e6e6"/><circle cx="7" cy="6.800" r="3.500" fill="#282828"/><circle cx="7" cy="6.800" r="2.300" fill="#e6e6e6"/><circle cx="7" cy="6.800" r="1.200" fill="#282828"/></svg>
<svg width="7" height="7" viewBox="0 0 7 7" style="left:47.5px;top:233.5px"><path d="M0.500,0.300V6.300L6.500,3.300Z" fill="#c8c8c8"/></svg>
<svg width="15" height="14" viewBox="0 0 15 14" style="left:62.5px;top:230.5px"><path d="M1.800,0.500H13.200Q14.800,0.700 14,2.200L8.600,12.800Q7.500,14.300 6.400,12.800L1,2.200Q0.200,0.700 1.800,0.500Z" fill="#e0934e"/><path d="M4.700,3.300H10.300L7.500,9Z" fill="#282828"/></svg>
<div class="t" style="left:83.5px;top:229.5px">Cube<span class="dg">.004</span></div>
<svg width="15" height="15" viewBox="0 0 15 15" style="left:155px;top:229.5px"><path d="M9.200,1.300A4,4 0 0 0 6.500,7L1.500,12A1.500,1.500 0 0 0 3.600,14L8.500,9A4,4 0 0 0 13.800,5.300L11.500,7.300 9.300,6.800 8.600,4.500Z" fill="none" stroke="#6f8fd6" stroke-width="1.200" stroke-linejoin="round"/></svg>
<svg width="14" height="10" viewBox="0 0 14 10" style="left:188.5px;top:231px"><path d="M0.300,5C3,-.6 11,-.6 13.700,5C11,10.600 3,10.600 0.300,5Z" fill="#e6e6e6"/><circle cx="7" cy="4.800" r="3.200" fill="#282828"/><circle cx="7" cy="4.800" r="1.700" fill="#e6e6e6"/></svg>
<svg width="14" height="12" viewBox="0 0 14 12" style="left:208.5px;top:230px"><path d="M0,2.500H3.500L4.500,0.300H9.500L10.500,2.500H14V12H0Z" fill="#e6e6e6"/><circle cx="7" cy="6.800" r="3.500" fill="#282828"/><circle cx="7" cy="6.800" r="2.300" fill="#e6e6e6"/><circle cx="7" cy="6.800" r="1.200" fill="#282828"/></svg>
<div class="a" style="left:165.5px;top:147px;width:21px;height:20px;background:#282828"></div>
<div class="a" style="left:165.5px;top:167px;width:21px;height:20px;background:#282828"></div>
<div class="a" style="left:165.5px;top:187px;width:21px;height:20px;background:#282828"></div>
<div class="a" style="left:165.5px;top:207px;width:21px;height:20px;background:#282828"></div>
<div class="a" style="left:165.5px;top:227px;width:21px;height:20px;background:#282828"></div>
<div class="a" style="left:230.500px;top:35px;width:2.500px;height:53px;background:#4a4a4a;border-radius:2px"></div>
<div class="a" style="left:7px;top:242.500px;width:183px;height:2.500px;background:#4a4a4a;border-radius:2px"></div>
</div>
<!-- ============ PROPERTIES ============ -->
<div class="panel" id="pr" style="left:1130px;top:278px;width:236px;height:408px;background:#2d2d2d;border-radius:5px 0 0 5px">
<div class="a" style="left:0px;top:0px;width:236px;height:26px;background:#303030;"></div>
<div class="a" style="left:0px;top:26px;width:28px;height:382px;background:#1f1f1f;"></div>
<div class="dd" style="left:9px;top:4px;width:31px;height:18px;border-radius:4px;background:#252525;border-color:#383838"></div>
<svg width="14" height="15" viewBox="0 0 14 15" style="left:13px;top:5.5px"><rect x="0.500" y="0.500" width="13" height="6" rx="3" fill="#e6e6e6"/><rect x="7.500" y="2" width="4.500" height="3" rx="1.300" fill="#252525"/><rect x="0.500" y="8.500" width="13" height="6" rx="3" fill="#e6e6e6"/><rect x="8" y="10" width="4" height="3" rx="1.300" fill="#252525"/></svg>
<svg width="8" height="6" viewBox="0 0 8 6" style="left:29.5px;top:10.5px"><path d="M1,1L4,4.2 7,1" fill="none" stroke="#e6e6e6" stroke-width="1.3" stroke-linecap="round" stroke-linejoin="round"/></svg>
<div class="fld" style="left:66px;top:4px;width:110px;height:18px;border-radius:4px;border-color:#2a2a2a"></div>
<svg width="16" height="16" viewBox="0 0 16 16" style="left:70px;top:5px"><circle cx="9.500" cy="6" r="4.200" class="ic" stroke-width="1.300"/><path d="M6.500,9L1.500,14" class="ic" stroke-width="1.400"/></svg>
<div class="dd" style="left:209px;top:4px;width:18px;height:18px;border-radius:4px;background:#252525;border-color:#2f2f2f"></div>
<svg width="8" height="6" viewBox="0 0 8 6" style="left:214px;top:11px"><path d="M1,1L4,4.2 7,1" fill="none" stroke="#e6e6e6" stroke-width="1.3" stroke-linecap="round" stroke-linejoin="round"/></svg>
<svg width="16" height="16" viewBox="0 0 16 16" style="left:7px;top:37px"><g fill="#e0e0e0"><rect x="3.300" y="1" width="1.400" height="7"/><rect x="2.300" y="8" width="3.400" height="6.500" rx="1.500"/><path d="M9.300,1.500V5A2.800,2.800 0 0 0 10.800,7.300V14.500H13V7.300A2.800,2.800 0 0 0 14.500,5V1.500H13V4.500H10.800V1.500Z"/></g></svg>
<svg width="16" height="16" viewBox="0 0 16 16" style="left:7px;top:72.5px"><g fill="none" stroke="#e0e0e0" stroke-width="1.300"><rect x="1.500" y="4.500" width="13" height="9.500"/><path d="M4.500,4.500V2.500H8.500V4.500"/></g><rect x="4" y="7" width="6" height="4.500" fill="#e0e0e0"/><circle cx="12.300" cy="7.500" r="1" fill="#e0e0e0"/></svg>
<svg width="16" height="16" viewBox="0 0 16 16" style="left:7px;top:101.5px"><path d="M2.500,1H13.500V6H2.500Z" fill="#e0e0e0"/><path d="M0.500,6H15.500V11H12.500V15H3.500V11H0.500Z" fill="#e0e0e0"/><rect x="4.800" y="8" width="6.400" height="5.800" fill="#1f1f1f"/><path d="M5.500,13L8,9.500 10.500,13Z" fill="#e0e0e0"/></svg>
<svg width="16" height="16" viewBox="0 0 16 16" style="left:7px;top:128.5px"><g fill="none" stroke="#e0e0e0" stroke-width="1.100"><path d="M1.500,5V14.500H11M3.500,3.500V12.500H13"/></g><rect x="5" y="1" width="10" height="10" fill="#e0e0e0"/><path d="M6.500,9.500L9.500,5.500 11.500,8 12.500,7 13.500,9.500Z" fill="#1f1f1f"/><circle cx="8" cy="4" r="1" fill="#1f1f1f"/></svg>
<svg width="16" height="16" viewBox="0 0 16 16" style="left:7px;top:156.5px"><path d="M5.500,1.500L9,9.500A3.700,3.700 0 0 1 2,9.500Z" fill="#bdbdbd"/><circle cx="12.500" cy="4.500" r="2" fill="#e0e0e0"/><circle cx="11" cy="11.500" r="3.300" fill="#1f1f1f" stroke="#e0e0e0" stroke-width="1.200"/><circle cx="11" cy="11.500" r="1.100" fill="#e0e0e0"/></svg>
<svg width="16" height="16" viewBox="0 0 16 16" style="left:7px;top:185px"><circle cx="8" cy="8" r="6.300" fill="none" stroke="#d4535c" stroke-width="1.300"/><path d="M4,6L7,5 8.500,7.500 6.500,10 4.500,9Z M9.500,9L12,8.500 11.500,11.500 9.500,12Z" fill="#d4535c"/><path d="M1.500,12.500L14.500,3" stroke="#d4535c" stroke-width="1.100"/></svg>
<svg width="16" height="16" viewBox="0 0 16 16" style="left:7px;top:221.5px"><g fill="none" stroke="#e0e0e0" stroke-width="1.300"><rect x="1.500" y="1.500" width="13" height="3.500"/><rect x="2.500" y="5" width="11" height="9.500"/></g><rect x="6" y="7" width="4" height="1.800" fill="#e0e0e0"/></svg>
<svg width="16" height="16" viewBox="0 0 16 16" style="left:7px;top:257px"><rect x="4" y="4" width="8" height="8" fill="#e0934e"/><path d="M1,4.500V1H4.500M11.500,1H15V4.500M15,11.500V15H11.500M4.500,15H1V11.500" fill="none" stroke="#e0934e" stroke-width="1.200"/></svg>
<svg width="16" height="16" viewBox="0 0 16 16" style="left:7px;top:284.5px"><path d="M9.800,1A4.300,4.300 0 0 0 6.600,7.200L1.500,12.300A1.700,1.700 0 0 0 3.900,14.700L9,9.500A4.300,4.300 0 0 0 14.900,5.400L12.300,7.600 9.900,7 9.200,4.600 11.600,2A4.300,4.300 0 0 0 9.800,1Z" fill="#6f8fd6"/></svg>
<svg width="16" height="16" viewBox="0 0 16 16" style="left:7px;top:313.5px"><g fill="none" stroke="#6f8fd6" stroke-width="1.200"><path d="M3,3H13M3,3L12,13M3,3V12"/></g><circle cx="3" cy="3" r="2" fill="#6f8fd6"/><circle cx="13.500" cy="3" r="1.500" fill="#6f8fd6"/><circle cx="12.500" cy="13.300" r="1.500" fill="#6f8fd6"/><circle cx="3" cy="12.500" r="1.500" fill="#6f8fd6"/></svg>
<svg width="16" height="16" viewBox="0 0 16 16" style="left:7px;top:341.5px"><circle cx="8" cy="8.500" r="5" fill="none" stroke="#6f8fd6" stroke-width="1.300"/><circle cx="8" cy="8.500" r="2.200" fill="#6f8fd6"/><path d="M3,3.500A7,7 0 0 1 13,3.500" fill="none" stroke="#6f8fd6" stroke-width="1.200"/></svg>
<svg width="16" height="16" viewBox="0 0 16 16" style="left:7px;top:369px"><g fill="none" stroke="#6f8fd6" stroke-width="1.400"><ellipse cx="8" cy="9" rx="6.300" ry="4.300" transform="rotate(-25 8 9)"/></g><circle cx="5.500" cy="10.300" r="2" fill="#6f8fd6"/><circle cx="12" cy="5" r="1.600" fill="#6f8fd6"/></svg>
<svg width="16" height="16" viewBox="0 0 16 16" style="left:7px;top:396px"><g fill="none" stroke="#33c594" stroke-width="1.200"><path d="M2.500,2.500H13.500L8,13.500Z"/><rect x="0.800" y="0.800" width="3.300" height="3.300" fill="#1f1f1f"/><rect x="12" y="0.800" width="3.300" height="3.300" fill="#1f1f1f"/></g></svg>
<svg width="14" height="14" viewBox="0 0 14 14" style="left:38.5px;top:37px"><rect x="3.500" y="3.500" width="7" height="7" fill="#e0e0e0"/><path d="M0.600,4V0.600H4M10,0.600H13.400V4M13.400,10V13.400H10M4,13.400H0.600V10" fill="none" stroke="#e0e0e0" stroke-width="1.100"/></svg>
<div class="t" style="left:62px;top:37.2px;">sol</div>
<svg width="6" height="10" viewBox="0 0 6 10" style="left:94px;top:39.5px"><path d="M1,1L5,5 1,9" fill="none" stroke="#d0d0d0" stroke-width="1.200"/></svg>
<svg width="15" height="15" viewBox="0 0 15 15" style="left:108.5px;top:37px"><circle cx="7.500" cy="7.500" r="6.500" fill="none" stroke="#e0e0e0" stroke-width="1.200"/><path d="M7.500,1A6.500,6.500 0 0 0 1,7.500H7.500Z" fill="#e0e0e0"/><path d="M7.500,14A6.500,6.500 0 0 0 14,7.500H7.500Z" fill="#e0e0e0"/></svg>
<div class="t" style="left:132px;top:37.2px;">tissus</div>
<svg width="15" height="16" viewBox="0 0 15 16" style="left:211px;top:35px"><path d="M8.500,1.500L13.500,6.500 11.800,7 9.500,10.500 9,12.500 3,6.500 5,6 8.300,3.300Z M6,9.500L1.500,14.500" fill="none" stroke="#b0b0b0" stroke-width="1.100" stroke-linejoin="round"/></svg>
<div class="a" style="left:37px;top:70px;width:162.500px;height:99.500px;background:#242424;border:1px solid #383838;border-radius:4px"></div>
<div class="a" style="left:42px;top:96px;width:152px;height:18px;background:#46474b;border-radius:3px"></div>
<svg width="14" height="14" viewBox="0 0 14 14" style="left:45.200000000000045px;top:77.5px"><defs><radialGradient id="sg362" cx=".4" cy=".35" r=".7"><stop offset="0" stop-color="#b06b35"/><stop offset=".55" stop-color="#7e4a22"/><stop offset="1" stop-color="#2a1a10"/></radialGradient></defs><circle cx="7" cy="7" r="6.800" fill="url(#sg362)"/></svg>
<svg width="14" height="14" viewBox="0 0 14 14" style="left:45.200000000000045px;top:98px"><defs><radialGradient id="sg383" cx=".4" cy=".35" r=".7"><stop offset="0" stop-color="#b07a50"/><stop offset=".55" stop-color="#8a5c3a"/><stop offset="1" stop-color="#35241a"/></radialGradient></defs><circle cx="7" cy="7" r="6.800" fill="url(#sg383)"/></svg>
<div class="t" style="left:67.29999999999995px;top:77.9px;">herringbone_<span class="dg">03</span></div>
<div class="t" style="left:67.29999999999995px;top:98.2px;color:#fff">tissus</div>
<svg width="7" height="7" viewBox="0 0 7 7" style="left:48px;top:156px"><path d="M0.500,0.300V6.300L6.500,3.300Z" fill="#c8c8c8"/></svg>
<svg width="12" height="5" viewBox="0 0 12 5" style="left:122.5px;top:157px"><g fill="#9a9a9a"><rect x="0" y="0" width="1.300" height="1.300"/><rect x="3" y="0" width="1.300" height="1.300"/><rect x="6" y="0" width="1.300" height="1.300"/><rect x="9" y="0" width="1.300" height="1.300"/><rect x="0" y="3" width="1.300" height="1.300"/><rect x="3" y="3" width="1.300" height="1.300"/><rect x="6" y="3" width="1.300" height="1.300"/><rect x="9" y="3" width="1.300" height="1.300"/></g></svg>
<div class="a" style="left:208.5px;top:71px;width:19px;height:18.5px;background:#4b4b4b;border-radius:4px 4px 0 0"></div>
<div class="a" style="left:208.5px;top:90px;width:19px;height:18.5px;background:#4b4b4b;border-radius:0 0 4px 4px"></div>
<svg width="10" height="10" viewBox="0 0 10 10" style="left:213px;top:75px"><path d="M5,1V9M1,5H9" stroke="#e6e6e6" stroke-width="1.200" fill="none"/></svg>
<svg width="10" height="10" viewBox="0 0 10 10" style="left:213px;top:94.5px"><path d="M1.500,5H8.500" stroke="#e6e6e6" stroke-width="1.200" fill="none"/></svg>
<div class="dd" style="left:208.5px;top:117px;width:19px;height:18.500px;border-radius:4px;background:#252525;border-color:#333"></div>
<svg width="8" height="6" viewBox="0 0 8 6" style="left:214px;top:124px"><path d="M1,1L4,4.2 7,1" fill="none" stroke="#e6e6e6" stroke-width="1.3" stroke-linecap="round" stroke-linejoin="round"/></svg>
<div class="a" style="left:208.5px;top:142.5px;width:19px;height:19px;background:#4b4b4b;border-radius:4px 4px 0 0"></div>
<div class="a" style="left:208.5px;top:162px;width:19px;height:19px;background:#4b4b4b;border-radius:0 0 4px 4px"></div>
<svg width="9" height="7" viewBox="0 0 9 7" style="left:213.5px;top:148.5px"><path d="M4.500,0.500L8.700,6.500H0.300Z" fill="#e6e6e6"/></svg>
<svg width="9" height="7" viewBox="0 0 9 7" style="left:213.5px;top:168px"><path d="M4.500,6.500L8.700,0.500H0.300Z" fill="#e6e6e6"/></svg>
<div class="a" style="left:230.5px;top:28px;width:2.5px;height:121px;background:#4a4a4a;border-radius:2px"></div>
<div class="dd" style="left:38px;top:187.5px;width:30px;height:19px;border-radius:4px 0 0 4px;background:#252525;border-color:#383838"></div>
<svg width="15" height="15" viewBox="0 0 15 15" style="left:41px;top:189.5px"><circle cx="7.500" cy="7.500" r="6.500" fill="none" stroke="#e0e0e0" stroke-width="1.200"/><path d="M7.500,1A6.500,6.500 0 0 0 1,7.500H7.500Z" fill="#e0e0e0"/><path d="M7.500,14A6.500,6.500 0 0 0 14,7.500H7.500Z" fill="#e0e0e0"/></svg>
<svg width="8" height="6" viewBox="0 0 8 6" style="left:57.5px;top:195px"><path d="M1,1L4,4.2 7,1" fill="none" stroke="#e6e6e6" stroke-width="1.3" stroke-linecap="round" stroke-linejoin="round"/></svg>
<div class="fld" style="left:67.5px;top:187.5px;width:60px;height:19px;border-radius:0;border-color:#2c2c2c"></div>
<div class="t" style="left:75.5px;top:190.5px;">tissus</div>
<div class="a" style="left:127.5px;top:187.5px;width:19.7px;height:19px;background:#4772b3;"></div>
<svg width="15" height="15" viewBox="0 0 15 15" style="left:130px;top:189.5px"><path d="M7.500,0.800L13.500,2.800V7.500C13.500,11 10.500,13.300 7.500,14.300C4.500,13.300 1.500,11 1.500,7.500V2.800Z" fill="#fff"/><path d="M4.500,7.500L6.800,9.800 10.800,5" fill="none" stroke="#4772b3" stroke-width="1.600"/></svg>
<div class="a" style="left:147.5px;top:187.5px;width:20px;height:19px;background:#4b4b4b;"></div>
<svg width="14" height="14" viewBox="0 0 14 14" style="left:150.5px;top:190px"><path d="M4.500,3.500V1H10L13,4V10.500H9.500M9.500,4.500V13H1V3.500H8.500Z" fill="none" stroke="#e6e6e6" stroke-width="1.100" stroke-linejoin="round"/></svg>
<div class="a" style="left:168px;top:187.5px;width:19.5px;height:19px;background:#4b4b4b;border-radius:0 4px 4px 0"></div>
<svg width="10" height="10" viewBox="0 0 10 10" style="left:173px;top:192.5px"><path d="M1,1L9,9M9,1L1,9" stroke="#e6e6e6" stroke-width="1.200" fill="none"/></svg>
<div class="dd" style="left:198px;top:187.5px;width:29px;height:19px;border-radius:4px;background:#252525;border-color:#383838"></div>
<svg width="15" height="15" viewBox="0 0 15 15" style="left:201px;top:189.5px"><g fill="none" stroke="#e6e6e6" stroke-width="1.100"><path d="M2.500,2.500H12.500L7.500,12.500Z"/><rect x="0.800" y="0.800" width="3.200" height="3.200" fill="#252525"/><rect x="11" y="0.800" width="3.200" height="3.200" fill="#252525"/><rect x="5.900" y="11" width="3.200" height="3.200" fill="#252525"/></g></svg>
<svg width="8" height="6" viewBox="0 0 8 6" style="left:217.5px;top:195px"><path d="M1,1L4,4.2 7,1" fill="none" stroke="#e6e6e6" stroke-width="1.3" stroke-linecap="round" stroke-linejoin="round"/></svg>
<div class="a" style="left:36.5px;top:217px;width:191.5px;height:24.5px;background:#383838;border-radius:4px"></div>
<svg width="6" height="10" viewBox="0 0 6 10" style="left:46.5px;top:225px"><path d="M1,1L5,5 1,9" fill="none" stroke="#d0d0d0" stroke-width="1.200"/></svg>
<div class="t" style="left:58.299999999999955px;top:223.2px;">Preview</div>
<svg width="12" height="5" viewBox="0 0 12 5" style="left:210.5px;top:227px"><g fill="#8a8a8a"><rect x="0" y="0" width="1.300" height="1.300"/><rect x="0" y="3" width="1.300" height="1.300"/><rect x="3" y="0" width="1.300" height="1.300"/><rect x="3" y="3" width="1.300" height="1.300"/><rect x="6" y="0" width="1.300" height="1.300"/><rect x="6" y="3" width="1.300" height="1.300"/><rect x="9" y="0" width="1.300" height="1.300"/><rect x="9" y="3" width="1.300" height="1.300"/></g></svg>
<div class="a" style="left:36.5px;top:244.5px;width:191.5px;height:170px;background:#383838;border-radius:4px"></div>
<svg width="9" height="7" viewBox="0 0 9 7" style="left:44.5px;top:253.5px"><path d="M1,1L4.500,5 8,1" fill="none" stroke="#d0d0d0" stroke-width="1.200"/></svg>
<div class="t" style="left:58.299999999999955px;top:249.9px;">Surface</div>
<svg width="12" height="5" viewBox="0 0 12 5" style="left:210.5px;top:254px"><g fill="#8a8a8a"><rect x="0" y="0" width="1.300" height="1.300"/><rect x="0" y="3" width="1.300" height="1.300"/><rect x="3" y="0" width="1.300" height="1.300"/><rect x="3" y="3" width="1.300" height="1.300"/><rect x="6" y="0" width="1.300" height="1.300"/><rect x="6" y="3" width="1.300" height="1.300"/><rect x="9" y="0" width="1.300" height="1.300"/><rect x="9" y="3" width="1.300" height="1.300"/></g></svg>
<div class="t" style="left:2px;width:100px;text-align:right;top:280.2px">Surface</div>
<div class="a" style="left:112px;top:278px;width:87px;height:18px;background:#282828;border-radius:4px"></div>
<svg width="7" height="7" viewBox="0 0 7 7" style="left:117.5px;top:283.70000000000005px"><circle cx="3.500" cy="3.500" r="3.300" fill="#63c763"/></svg>
<div class="t" style="left:133px;top:280.2px;">Principled B...</div>
<div class="dd" style="left:112px;top:314.5px;width:87px;height:17.500px;border-radius:4px;background:#282828;border-color:#444"></div>
<div class="t" style="left:119.5px;top:316.5px;">GGX</div>
<svg width="8" height="6" viewBox="0 0 8 6" style="left:189.5px;top:321px"><path d="M1,1L4,4.2 7,1" fill="none" stroke="#e6e6e6" stroke-width="1.3" stroke-linecap="round" stroke-linejoin="round"/></svg>
<svg width="5" height="5" viewBox="0 0 5 5" style="left:207.5px;top:321px"><circle cx="2.500" cy="2.500" r="1.800" fill="#c8c8c8"/></svg>
<div class="dd" style="left:112px;top:339.5px;width:87px;height:17.500px;border-radius:4px;background:#282828;border-color:#444"></div>
<div class="t" style="left:119.5px;top:341.5px;">Random Walk</div>
<svg width="8" height="6" viewBox="0 0 8 6" style="left:189.5px;top:346px"><path d="M1,1L4,4.2 7,1" fill="none" stroke="#e6e6e6" stroke-width="1.3" stroke-linecap="round" stroke-linejoin="round"/></svg>
<svg width="5" height="5" viewBox="0 0 5 5" style="left:207.5px;top:346px"><circle cx="2.500" cy="2.500" r="1.800" fill="#c8c8c8"/></svg>
<svg width="7" height="7" viewBox="0 0 7 7" style="left:48px;top:369.5px"><path d="M0.500,0.300V6.300L6.500,3.300Z" fill="#c8c8c8"/></svg>
<div class="t" style="left:61px;top:366.5px;">Base C...</div>
<div class="a" style="left:112px;top:364.5px;width:87px;height:17px;background:#282828;border-radius:4px"></div>
<svg width="7" height="7" viewBox="0 0 7 7" style="left:117.5px;top:369.70000000000005px"><circle cx="3.500" cy="3.500" r="3.300" fill="#c7c729"/></svg>
<div class="t" style="left:133px;top:366.5px;">Multiply</div>
<div class="t" style="left:2px;width:100px;text-align:right;top:391.5px">Subsurface</div>
<div class="a" style="left:112px;top:389.5px;width:18px;height:19px;background:#282828;border-radius:4px 0 0 4px"></div>
<svg width="7" height="7" viewBox="0 0 7 7" style="left:117.5px;top:394.70000000000005px"><circle cx="3.500" cy="3.500" r="3.300" fill="#a1a1a1"/></svg>
<div class="a" style="left:130px;top:389.5px;width:69px;height:19px;background:#545454;border-radius:0 4px 4px 0"></div>
<div class="t" style="left:130px;width:69px;text-align:center;top:391.5px"><span class="dg" style="letter-spacing:.8px">0.000</span></div>
<svg width="5" height="5" viewBox="0 0 5 5" style="left:207.5px;top:396px"><circle cx="2.500" cy="2.500" r="1.800" fill="#c8c8c8"/></svg>
</div>
<!-- ============ IMAGE EDITOR ============ -->
<div class="panel" id="ie" style="left:1px;top:403px;width:370px;height:283px;background:#2f2f2f">
<!-- photo (abstracted tonal shapes) -->
<div class="a" style="left:42px;top:45.500px;width:284px;height:5.500px;background:#4b4b4b"></div>
<svg width="284" height="231" viewBox="43 454 284 231" style="left:42px;top:51px;overflow:hidden">
<defs>
<linearGradient id="pbg" x1="0" x2="1" y1="0" y2="0"><stop offset="0" stop-color="#6b6b6b"/><stop offset=".12" stop-color="#707070"/><stop offset=".24" stop-color="#868686"/><stop offset=".55" stop-color="#8f8f8f"/><stop offset="1" stop-color="#a2a2a2"/></linearGradient>
<linearGradient id="pbg2" x1="0" x2="0" y1="0" y2="1"><stop offset="0" stop-color="#000" stop-opacity=".04"/><stop offset="1" stop-color="#fff" stop-opacity=".1"/></linearGradient>
<radialGradient id="hd" cx=".55" cy=".3" r=".75"><stop offset="0" stop-color="#f0f0f0"/><stop offset=".45" stop-color="#d6d6d6"/><stop offset=".8" stop-color="#b0b0b0"/><stop offset="1" stop-color="#8a8a8a"/></radialGradient>
<linearGradient id="brd" x1="0" x2="0" y1="0" y2="1"><stop offset="0" stop-color="#ebebeb"/><stop offset=".5" stop-color="#cdcdcd"/><stop offset="1" stop-color="#858585"/></linearGradient>
<filter id="b1" x="-20%" y="-20%" width="140%" height="140%"><feGaussianBlur stdDeviation="1.2"/></filter>
<filter id="b2" x="-20%" y="-20%" width="140%" height="140%"><feGaussianBlur stdDeviation="2.5"/></filter>
<filter id="b4" x="-50%" y="-50%" width="200%" height="200%"><feGaussianBlur stdDeviation="14"/></filter>
<filter id="b3" x="-20%" y="-20%" width="140%" height="140%"><feGaussianBlur stdDeviation="0.7"/></filter>
</defs>
<rect x="43" y="454" width="284" height="231" fill="url(#pbg)"/>
<rect x="43" y="454" width="284" height="231" fill="url(#pbg2)"/>
<!-- lighter zone left of head -->


<!-- robe -->
<path d="M43,662L45,657.500 63.800,628.400 105.400,603.400 120,566 126,558 134,556 150,572 190,580 232,590 253,618 271.700,638.800 292.500,665.800 308,682.400 309,685 43,685Z" fill="#1d1d1d" filter="url(#b3)"/>
<path d="M120,566L126,558 134,556 160,600 205,685 150,685 125,625Z" fill="#121212" filter="url(#b1)"/>
<path d="M75,640L106,622 132,685 62,685Z" fill="#282828" filter="url(#b2)"/>
<path d="M242,628L262,644 283,685 246,685Z" fill="#262626" filter="url(#b2)"/>
<!-- neck shadow -->
<path d="M126,545L150,560 152,592 131,562Z" fill="#444" filter="url(#b1)"/>
<!-- ear -->
<ellipse cx="118.500" cy="533" rx="12" ry="20" fill="#c6c6c6" filter="url(#b3)"/>
<ellipse cx="121" cy="535" rx="5" ry="11" fill="#8a8a8a" filter="url(#b1)"/>
<!-- head -->
<path d="M113,512C108,466 138,446 168,447C202,448 219,476 220,508C223,528 223,548 213,566L200,582 160,576 132,548C122,540 114,528 113,512Z" fill="url(#hd)" filter="url(#b3)"/>
<path d="M113,512C110,480 124,462 138,456C128,480 128,520 138,556C122,540 114,528 113,512Z" fill="#959595" opacity=".75" filter="url(#b2)"/>
<!-- eye sockets / brows -->
<ellipse cx="166" cy="511" rx="13" ry="6" fill="#8c8c8c" opacity=".8" filter="url(#b2)"/>
<ellipse cx="205" cy="511" rx="11" ry="5.500" fill="#8c8c8c" opacity=".8" filter="url(#b2)"/>
<ellipse cx="166" cy="513" rx="7" ry="2.600" fill="#2e2e2e" filter="url(#b1)"/>
<ellipse cx="205" cy="513" rx="6" ry="2.400" fill="#2e2e2e" filter="url(#b1)"/>
<path d="M150,505C160,499 175,500 183,505M195,504C203,499 213,500 219,504" stroke="#d8d8d8" stroke-width="2.500" fill="none" filter="url(#b1)"/>
<!-- nose / cheek -->
<path d="M186,516C187,530 184,540 184,545L200,548C206,542 200,528 198,516Z" fill="#a5a5a5" opacity=".8" filter="url(#b2)"/>
<path d="M184,546Q193,551 203,547" stroke="#5e5e5e" stroke-width="2" fill="none" filter="url(#b1)"/>
<path d="M216,512C222,526 222,546 213,562" stroke="#8e8e8e" stroke-width="5" fill="none" filter="url(#b2)"/>
<path d="M140,525C142,545 150,558 160,566" stroke="#a8a8a8" stroke-width="6" fill="none" filter="url(#b2)"/>
<!-- face midtone -->
<path d="M140,520C150,512 200,510 220,516C222,535 220,552 212,566L200,582 160,576 136,552Z" fill="#9a9a9a" opacity=".2" filter="url(#b2)"/>
<!-- beard -->
<path d="M150,556C165,548 180,546 197,547C212,548 222,553 226,562L230,597 232,628 231,640 226,653 210,640 193,628 165,615 143,601 138,585 134.500,566C138,560 144,558 150,556Z" fill="url(#brd)" filter="url(#b1)"/>
<path d="M156,560C175,549 207,549 226,568C207,558 180,557 156,560Z" fill="#f7f7f7" filter="url(#b3)"/>
<path d="M178,558.500Q192,555.500 204,559.500Q192,563 178,558.500Z" fill="#4a4a4a" filter="url(#b1)"/>
<path d="M143,601L165,615 193,628 210,640 226,653C224,636 214,622 198,612C180,604 160,600 143,596Z" fill="#6c6c6c" opacity=".5" filter="url(#b2)"/>
<path d="M134.500,566L138,585 143,601C150,596 150,580 146,566Z" fill="#8a8a8a" opacity=".5" filter="url(#b1)"/>
</svg>
<div class="a" style="left:42px;top:51px;width:1px;height:231px;background:#9a9a9a;opacity:.55"></div>
<div class="a" style="left:42px;top:281px;width:284px;height:1px;background:#9a9a9a;opacity:.7"></div>
<!-- header widgets -->
<div class="dd" style="left:-14px;top:4px;width:31.500px;height:18px;border-radius:4px;background:#252525;border-color:#383838"></div>
<svg width="8" height="14" viewBox="0 0 8 14" style="left:-1px;top:6px"><path d="M0,0.500H5.500V13H0" fill="none" stroke="#e6e6e6" stroke-width="1.100"/><rect x="0" y="1" width="4" height="5" fill="#e6e6e6"/></svg>
<svg width="8" height="6" viewBox="0 0 8 6" style="left:7.500px;top:11px"><path d="M1,1L4,4.2 7,1" class="ic" stroke-width="1.300"/></svg>
<div class="dd" style="left:23px;top:4px;width:65px;height:18px;border-radius:4px;background:#252525;border-color:#383838"></div>
<svg width="16" height="16" viewBox="0 0 16 16" style="left:27px;top:5px"><rect x="1" y="1" width="14" height="14" fill="none" stroke="#e6e6e6" stroke-width="1"/><path d="M2,14L6.500,6.500 11,14Z" fill="#e6e6e6"/><circle cx="11" cy="5" r="1.500" fill="#e6e6e6"/></svg>
<div class="t" style="left:49.500px;top:6px">View</div>
<svg width="8" height="6" viewBox="0 0 8 6" style="left:79.500px;top:11px"><path d="M1,1L4,4.2 7,1" class="ic" stroke-width="1.300"/></svg>
<div class="a" style="left:97px;top:7.500px;width:14px;height:2.400px;background:#e6e6e6"></div>
<div class="a" style="left:97px;top:12.500px;width:14px;height:2.400px;background:#e6e6e6"></div>
<div class="a" style="left:97px;top:17.500px;width:14px;height:2.400px;background:#e6e6e6"></div>
<div class="dd" style="left:130.500px;top:4px;width:31.500px;height:18px;border-radius:4px 0 0 4px;background:#252525;border-color:#383838"></div>
<svg width="16" height="16" viewBox="0 0 16 16" style="left:134px;top:5px"><rect x="1" y="1" width="14" height="14" fill="none" stroke="#e6e6e6" stroke-width="1"/><path d="M2,14L6.500,6.500 11,14Z" fill="#e6e6e6"/><circle cx="11" cy="5" r="1.500" fill="#e6e6e6"/></svg>
<svg width="8" height="6" viewBox="0 0 8 6" style="left:152px;top:11px"><path d="M1,1L4,4.2 7,1" class="ic" stroke-width="1.300"/></svg>
<div class="fld" style="left:161.500px;top:4px;width:121px;height:18px;border-radius:0;border-color:#2a2a2a"></div>
<div class="t" style="left:169.500px;top:6px">aikido.jpg</div>
<div class="a sel" style="left:281.700px;top:4px;width:19.300px;height:18px"></div>
<svg width="15" height="15" viewBox="0 0 15 15" style="left:284px;top:5.500px"><path d="M7.500,0.800L13.500,2.800V7.500C13.500,11 10.500,13.300 7.500,14.300C4.500,13.300 1.500,11 1.500,7.500V2.800Z" fill="#fff"/><path d="M4.500,7.500L6.800,9.800 10.800,5" fill="none" stroke="#4772b3" stroke-width="1.600"/></svg>
<div class="a" style="left:301px;top:4px;width:60.700px;height:18px;background:#4b4b4b;border-radius:0 4px 4px 0"></div>
<div class="a" style="left:321.500px;top:4px;width:1px;height:18px;background:#404040"></div>
<div class="a" style="left:341.200px;top:4px;width:1px;height:18px;background:#404040"></div>
<svg width="14" height="14" viewBox="0 0 14 14" style="left:304.500px;top:6px"><path d="M4.500,3.500V1H10L13,4V10.500H9.500M9.500,4.500V13H1V3.500H8.500Z" fill="none" stroke="#e6e6e6" stroke-width="1.100" stroke-linejoin="round"/></svg>
<svg width="16" height="14" viewBox="0 0 16 14" style="left:324px;top:6px"><path d="M5,0.500H14.500V7.500H12M1,5.500H11V13H1Z" fill="#e6e6e6"/><path d="M11,5.500L14.500,2.500V9L11,13" fill="#cfcfcf"/><rect x="2.500" y="2.500" width="8" height="1.500" fill="#e6e6e6"/></svg>
<svg width="10" height="10" viewBox="0 0 10 10" style="left:346.500px;top:8px"><path d="M1,1L9,9M9,1L1,9" stroke="#e6e6e6" stroke-width="1.200" fill="none"/></svg>
<!-- nav gizmo buttons -->
<div class="a" style="left:335px;top:60.500px;width:25px;height:25px;border-radius:50%;background:#222"></div>
<div class="a" style="left:335px;top:91.500px;width:25px;height:25px;border-radius:50%;background:#222"></div>
<svg width="18" height="18" viewBox="0 0 18 18" style="left:338.500px;top:64px"><circle cx="10.500" cy="7" r="5.300" fill="#e6e6e6"/><path d="M10.500,4.200V9.800M7.700,7H13.300" stroke="#222" stroke-width="1.100"/><path d="M6.500,11L1.500,16" stroke="#e6e6e6" stroke-width="2.200" stroke-linecap="round"/></svg>
<svg width="18" height="18" viewBox="0 0 18 18" style="left:338.500px;top:95px"><path d="M4,9.500L5.500,15.500H12L14.500,9.500 16,5.500 14.500,5 13,8 13,2.500 11.500,2.500 11,7.500 10,1.500 8.500,1.500 8.500,7.500 7,2.500 5.500,3 6.500,9.500 3.500,7 2.500,8Z" fill="#e6e6e6"/></svg>
<svg width="6" height="10" viewBox="0 0 6 10" style="left:363.500px;top:68px"><path d="M5,1L1,5 5,9" fill="none" stroke="#bbb" stroke-width="1.200"/></svg>
<svg width="6" height="10" viewBox="0 0 6 10" style="left:1px;top:68px"><path d="M1,1L5,5 1,9" fill="none" stroke="#bbb" stroke-width="1.200"/></svg>
</div>
<!-- ============ NODE EDITOR ============ -->
<div class="panel" id="ne" style="left:374px;top:403px;width:753px;height:283px;background:#1d1d1d">
<svg width="753" height="283" viewBox="374 403 753 283" style="left:0;top:0;overflow:hidden"><g fill="#2c2c2c"><rect x="382.0" y="436.0" width="2" height="2"/><rect x="382.0" y="506.2" width="2" height="2"/><rect x="382.0" y="576.4" width="2" height="2"/><rect x="382.0" y="646.6" width="2" height="2"/><rect x="451.8" y="436.0" width="2" height="2"/><rect x="451.8" y="506.2" width="2" height="2"/><rect x="451.8" y="576.4" width="2" height="2"/><rect x="451.8" y="646.6" width="2" height="2"/><rect x="521.6" y="436.0" width="2" height="2"/><rect x="521.6" y="506.2" width="2" height="2"/><rect x="521.6" y="576.4" width="2" height="2"/><rect x="521.6" y="646.6" width="2" height="2"/><rect x="591.4" y="436.0" width="2" height="2"/><rect x="591.4" y="506.2" width="2" height="2"/><rect x="591.4" y="576.4" width="2" height="2"/><rect x="591.4" y="646.6" width="2" height="2"/><rect x="661.2" y="436.0" width="2" height="2"/><rect x="661.2" y="506.2" width="2" height="2"/><rect x="661.2" y="576.4" width="2" height="2"/><rect x="661.2" y="646.6" width="2" height="2"/><rect x="731.0" y="436.0" width="2" height="2"/><rect x="731.0" y="506.2" width="2" height="2"/><rect x="731.0" y="576.4" width="2" height="2"/><rect x="731.0" y="646.6" width="2" height="2"/><rect x="800.8" y="436.0" width="2" height="2"/><rect x="800.8" y="506.2" width="2" height="2"/><rect x="800.8" y="576.4" width="2" height="2"/><rect x="800.8" y="646.6" width="2" height="2"/><rect x="870.6" y="436.0" width="2" height="2"/><rect x="870.6" y="506.2" width="2" height="2"/><rect x="870.6" y="576.4" width="2" height="2"/><rect x="870.6" y="646.6" width="2" height="2"/><rect x="940.4" y="436.0" width="2" height="2"/><rect x="940.4" y="506.2" width="2" height="2"/><rect x="940.4" y="576.4" width="2" height="2"/><rect x="940.4" y="646.6" width="2" height="2"/><rect x="1010.2" y="436.0" width="2" height="2"/><rect x="1010.2" y="506.2" width="2" height="2"/><rect x="1010.2" y="576.4" width="2" height="2"/><rect x="1010.2" y="646.6" width="2" height="2"/><rect x="1080.0" y="436.0" width="2" height="2"/><rect x="1080.0" y="506.2" width="2" height="2"/><rect x="1080.0" y="576.4" width="2" height="2"/><rect x="1080.0" y="646.6" width="2" height="2"/></g><defs><linearGradient id="lg0" gradientUnits="userSpaceOnUse" x1="645.5" y1="0" x2="662.9" y2="0"><stop offset="0" stop-color="#c2c22e"/><stop offset="1" stop-color="#a1a1a1"/></linearGradient><linearGradient id="lg1" gradientUnits="userSpaceOnUse" x1="704.6" y1="0" x2="769.0" y2="0"><stop offset="0" stop-color="#c2c22e"/><stop offset="1" stop-color="#63c763"/></linearGradient><linearGradient id="lg2" gradientUnits="userSpaceOnUse" x1="801.7" y1="0" x2="875.9" y2="0"><stop offset="0" stop-color="#c2c22e"/><stop offset="1" stop-color="#63c763"/></linearGradient><linearGradient id="lg3" gradientUnits="userSpaceOnUse" x1="801.7" y1="0" x2="815.2" y2="0"><stop offset="0" stop-color="#c2c22e"/><stop offset="1" stop-color="#a1a1a1"/></linearGradient><linearGradient id="lg4" gradientUnits="userSpaceOnUse" x1="572.0" y1="0" x2="583.2" y2="0"><stop offset="0" stop-color="#a1a1a1"/><stop offset="1" stop-color="#6363c7"/></linearGradient></defs><path d="M645.5,450.5C654.2,450.5 654.2,484.0 662.9,484.0" fill="none" stroke="#111" stroke-width="4.1" opacity=".8"/><path d="M645.5,450.5C654.2,450.5 654.2,484.0 662.9,484.0" fill="none" stroke="url(#lg0)" stroke-width="2.7"/><path d="M704.6,460.0C736.8,460.0 736.8,459.0 769.0,459.0" fill="none" stroke="#111" stroke-width="4.1" opacity=".8"/><path d="M704.6,460.0C736.8,460.0 736.8,459.0 769.0,459.0" fill="none" stroke="url(#lg1)" stroke-width="2.7"/><path d="M704.6,460.0C741.2,460.0 749.3,556.0 785.9,556.0" fill="none" stroke="#111" stroke-width="4.1" opacity=".8"/><path d="M704.6,460.0C741.2,460.0 749.3,556.0 785.9,556.0" fill="none" stroke="#c2c22e" stroke-width="2.7"/><path d="M731.0,497.0C750.5,497.0 750.5,520.8 769.9,520.8" fill="none" stroke="#111" stroke-width="4.1" opacity=".8"/><path d="M731.0,497.0C750.5,497.0 750.5,520.8 769.9,520.8" fill="none" stroke="#6363c7" stroke-width="2.7"/><path d="M706.3,519.0C746.1,519.0 746.1,541.0 785.9,541.0" fill="none" stroke="#111" stroke-width="4.1" opacity=".8"/><path d="M706.3,519.0C746.1,519.0 746.1,541.0 785.9,541.0" fill="none" stroke="#c2c22e" stroke-width="2.7"/><path d="M706.3,519.0C712.8,519.0 712.8,555.0 719.3,555.0" fill="none" stroke="#111" stroke-width="4.1" opacity=".8"/><path d="M706.3,519.0C712.8,519.0 712.8,555.0 719.3,555.0" fill="none" stroke="#c2c22e" stroke-width="2.7"/><path d="M653.0,560.0C660.5,560.0 660.5,582.0 668.0,582.0" fill="none" stroke="#111" stroke-width="4.1" opacity=".8"/><path d="M653.0,560.0C660.5,560.0 660.5,582.0 668.0,582.0" fill="none" stroke="#c2c22e" stroke-width="2.7"/><path d="M686.6,568.0C717.0,568.0 717.0,563.0 747.5,563.0" fill="none" stroke="#111" stroke-width="4.1" opacity=".8"/><path d="M686.6,568.0C717.0,568.0 717.0,563.0 747.5,563.0" fill="none" stroke="#c2c22e" stroke-width="2.7"/><path d="M736.4,550.0C742.4,550.0 741.5,559.5 747.5,559.5" fill="none" stroke="#111" stroke-width="4.1" opacity=".8"/><path d="M736.4,550.0C742.4,550.0 741.5,559.5 747.5,559.5" fill="none" stroke="#a1a1a1" stroke-width="2.7"/><path d="M765.5,549.0C775.7,549.0 775.7,552.0 785.9,552.0" fill="none" stroke="#111" stroke-width="4.1" opacity=".8"/><path d="M765.5,549.0C775.7,549.0 775.7,552.0 785.9,552.0" fill="none" stroke="#c2c22e" stroke-width="2.7"/><path d="M804.2,540.5C833.1,540.5 833.1,557.0 862.0,557.0" fill="none" stroke="#111" stroke-width="4.1" opacity=".8"/><path d="M804.2,540.5C833.1,540.5 833.1,557.0 862.0,557.0" fill="none" stroke="#c2c22e" stroke-width="2.7"/><path d="M804.2,552.0C844.6,552.0 853.6,581.0 894.0,581.0" fill="none" stroke="#111" stroke-width="4.1" opacity=".8"/><path d="M804.2,552.0C844.6,552.0 853.6,581.0 894.0,581.0" fill="none" stroke="#a1a1a1" stroke-width="2.7"/><path d="M801.7,489.0C838.8,489.0 838.8,502.6 875.9,502.6" fill="none" stroke="#111" stroke-width="4.1" opacity=".8"/><path d="M801.7,489.0C838.8,489.0 838.8,502.6 875.9,502.6" fill="none" stroke="url(#lg2)" stroke-width="2.7"/><path d="M801.7,489.0C808.5,489.0 808.5,533.4 815.2,533.4" fill="none" stroke="#111" stroke-width="4.1" opacity=".8"/><path d="M801.7,489.0C808.5,489.0 808.5,533.4 815.2,533.4" fill="none" stroke="url(#lg3)" stroke-width="2.7"/><path d="M846.5,511.5C854.2,511.5 854.2,556.0 862.0,556.0" fill="none" stroke="#111" stroke-width="4.1" opacity=".8"/><path d="M846.5,511.5C854.2,511.5 854.2,556.0 862.0,556.0" fill="none" stroke="#c2c22e" stroke-width="2.7"/><path d="M879.3,541.8C886.6,541.8 886.6,554.5 894.0,554.5" fill="none" stroke="#111" stroke-width="4.1" opacity=".8"/><path d="M879.3,541.8C886.6,541.8 886.6,554.5 894.0,554.5" fill="none" stroke="#c2c22e" stroke-width="2.7"/><path d="M925.4,543.0C931.4,543.0 925.0,555.0 931.0,555.0" fill="none" stroke="#111" stroke-width="3.2" opacity=".8"/><path d="M925.4,543.0C931.4,543.0 925.0,555.0 931.0,555.0" fill="none" stroke="#dcdcdc" stroke-width="1.8"/><path d="M559.4,545.0C571.3,545.0 571.3,576.0 583.2,576.0" fill="none" stroke="#111" stroke-width="4.1" opacity=".8"/><path d="M559.4,545.0C571.3,545.0 571.3,576.0 583.2,576.0" fill="none" stroke="#6363c7" stroke-width="2.7"/><path d="M572.0,581.0C578.0,581.0 577.2,602.0 583.2,602.0" fill="none" stroke="#111" stroke-width="4.1" opacity=".8"/><path d="M572.0,581.0C578.0,581.0 577.2,602.0 583.2,602.0" fill="none" stroke="url(#lg4)" stroke-width="2.7"/><path d="M604.0,567.5C617.0,567.5 617.0,545.5 630.0,545.5" fill="none" stroke="#111" stroke-width="4.1" opacity=".8"/><path d="M604.0,567.5C617.0,567.5 617.0,545.5 630.0,545.5" fill="none" stroke="#6363c7" stroke-width="2.7"/><path d="M604.0,567.5C628.6,567.5 649.7,549.7 674.3,549.7" fill="none" stroke="#111" stroke-width="4.1" opacity=".8"/><path d="M604.0,567.5C628.6,567.5 649.7,549.7 674.3,549.7" fill="none" stroke="#6363c7" stroke-width="2.7"/><path d="M604.0,568.5C612.5,568.5 612.5,590.0 621.0,590.0" fill="none" stroke="#111" stroke-width="4.1" opacity=".8"/><path d="M604.0,568.5C612.5,568.5 612.5,590.0 621.0,590.0" fill="none" stroke="#6363c7" stroke-width="2.7"/><path d="M604.0,569.0C623.8,569.0 617.2,650.0 637.0,650.0" fill="none" stroke="#111" stroke-width="4.1" opacity=".8"/><path d="M604.0,569.0C623.8,569.0 617.2,650.0 637.0,650.0" fill="none" stroke="#6363c7" stroke-width="2.7"/><path d="M669.0,617.0C675.0,617.0 672.0,621.5 678.0,621.5" fill="none" stroke="#111" stroke-width="4.1" opacity=".8"/><path d="M669.0,617.0C675.0,617.0 672.0,621.5 678.0,621.5" fill="none" stroke="#c2c22e" stroke-width="2.7"/><path d="M696.7,607.0C775.6,607.0 815.1,621.6 894.0,621.6" fill="none" stroke="#111" stroke-width="4.1" opacity=".8"/><path d="M696.7,607.0C775.6,607.0 815.1,621.6 894.0,621.6" fill="none" stroke="#6363c7" stroke-width="2.7"/><rect x="624.9" y="446.2" width="21.6" height="44.1" rx="1.5" fill="#0e0e0e" opacity=".75"/><rect x="625.9" y="446.7" width="19.6" height="42.1" rx="1" fill="#303030"/><rect x="625.9" y="446.7" width="19.6" height="2.1" rx="1" fill="#6e4424"/><rect x="627.4" y="447.3" width="1.6" height="1.2" fill="#e8d8b0" opacity=".8"/><rect x="628.4" y="452.2" width="14.6" height="1.1" fill="#474747"/><rect x="626.5" y="451.9" width="1.5" height="1.5" fill="#bdbdbd"/><rect x="643.4" y="451.9" width="1.5" height="1.5" fill="#bdbdbd"/><rect x="628.4" y="455.5" width="14.6" height="1.1" fill="#444"/><rect x="626.5" y="455.2" width="1.5" height="1.5" fill="#bdbdbd"/><rect x="643.4" y="455.2" width="1.5" height="1.5" fill="#bdbdbd"/><rect x="628.4" y="458.8" width="14.6" height="1.1" fill="#444"/><rect x="626.5" y="458.5" width="1.5" height="1.5" fill="#bdbdbd"/><rect x="628.4" y="462.1" width="14.6" height="1.1" fill="#3e3e3e"/><rect x="626.5" y="461.8" width="1.5" height="1.5" fill="#bdbdbd"/><rect x="628.4" y="465.4" width="14.6" height="1.1" fill="#474747"/><rect x="628.4" y="468.7" width="14.6" height="1.1" fill="#3e3e3e"/><rect x="626.5" y="468.4" width="1.5" height="1.5" fill="#bdbdbd"/><rect x="628.4" y="472.0" width="14.6" height="1.1" fill="#444"/><rect x="626.5" y="471.7" width="1.5" height="1.5" fill="#bdbdbd"/><rect x="628.4" y="475.3" width="14.6" height="1.1" fill="#444"/><rect x="628.4" y="478.6" width="14.6" height="1.1" fill="#474747"/><rect x="628.4" y="481.9" width="14.6" height="1.1" fill="#444"/><rect x="626.5" y="481.6" width="1.5" height="1.5" fill="#bdbdbd"/><rect x="628.4" y="485.2" width="14.6" height="1.1" fill="#474747"/><rect x="661.9" y="456.3" width="43.7" height="30.6" rx="1.5" fill="#0e0e0e" opacity=".75"/><rect x="662.9" y="456.8" width="41.7" height="28.6" rx="1" fill="#303030"/><rect x="662.9" y="456.8" width="41.7" height="2.1" rx="1" fill="#28586c"/><rect x="664.4" y="457.4" width="1.6" height="1.2" fill="#e8d8b0" opacity=".8"/><rect x="665.4" y="462.3" width="36.7" height="1.1" fill="#474747"/><rect x="663.5" y="462.0" width="1.5" height="1.5" fill="#bdbdbd"/><rect x="665.4" y="465.6" width="36.7" height="1.1" fill="#474747"/><rect x="663.5" y="465.3" width="1.5" height="1.5" fill="#bdbdbd"/><rect x="702.5" y="465.3" width="1.5" height="1.5" fill="#bdbdbd"/><rect x="665.4" y="468.9" width="36.7" height="1.1" fill="#3e3e3e"/><rect x="663.5" y="468.6" width="1.5" height="1.5" fill="#bdbdbd"/><rect x="665.4" y="472.2" width="36.7" height="1.1" fill="#3e3e3e"/><rect x="665.4" y="475.5" width="36.7" height="1.1" fill="#3e3e3e"/><rect x="663.5" y="475.2" width="1.5" height="1.5" fill="#bdbdbd"/><rect x="665.4" y="478.8" width="36.7" height="1.1" fill="#444"/><rect x="663.5" y="478.5" width="1.5" height="1.5" fill="#bdbdbd"/><rect x="665.4" y="482.1" width="36.7" height="1.1" fill="#474747"/><rect x="768.0" y="449.9" width="20.4" height="18.2" rx="1.5" fill="#0e0e0e" opacity=".75"/><rect x="769.0" y="450.4" width="18.4" height="16.2" rx="1" fill="#303030"/><rect x="769.0" y="450.4" width="18.4" height="2.1" rx="1" fill="#262626"/><rect x="771.5" y="455.9" width="13.4" height="1.1" fill="#474747"/><rect x="769.6" y="455.6" width="1.5" height="1.5" fill="#bdbdbd"/><rect x="785.3" y="455.6" width="1.5" height="1.5" fill="#bdbdbd"/><rect x="771.5" y="459.2" width="13.4" height="1.1" fill="#3e3e3e"/><rect x="785.3" y="458.9" width="1.5" height="1.5" fill="#bdbdbd"/><rect x="771.5" y="462.5" width="13.4" height="1.1" fill="#444"/><rect x="785.3" y="462.2" width="1.5" height="1.5" fill="#bdbdbd"/><rect x="712.4" y="486.6" width="19.6" height="34.0" rx="1.5" fill="#0e0e0e" opacity=".75"/><rect x="713.4" y="487.1" width="17.6" height="32.0" rx="1" fill="#303030"/><rect x="713.4" y="487.1" width="17.6" height="2.1" rx="1" fill="#6e2c41"/><rect x="714.9" y="487.7" width="1.6" height="1.2" fill="#e8d8b0" opacity=".8"/><rect x="715.9" y="492.6" width="12.6" height="1.1" fill="#3e3e3e"/><rect x="714.0" y="492.3" width="1.5" height="1.5" fill="#bdbdbd"/><rect x="728.9" y="492.3" width="1.5" height="1.5" fill="#bdbdbd"/><rect x="715.9" y="495.9" width="12.6" height="1.1" fill="#3e3e3e"/><rect x="714.0" y="495.6" width="1.5" height="1.5" fill="#bdbdbd"/><rect x="715.9" y="499.2" width="12.6" height="1.1" fill="#444"/><rect x="728.9" y="498.9" width="1.5" height="1.5" fill="#bdbdbd"/><rect x="715.9" y="502.5" width="12.6" height="1.1" fill="#3e3e3e"/><rect x="715.9" y="505.8" width="12.6" height="1.1" fill="#444"/><rect x="715.9" y="509.1" width="12.6" height="1.1" fill="#444"/><rect x="715.9" y="512.4" width="12.6" height="1.1" fill="#444"/><rect x="715.9" y="515.7" width="12.6" height="1.1" fill="#444"/><rect x="714.0" y="515.4" width="1.5" height="1.5" fill="#bdbdbd"/><rect x="768.9" y="484.1" width="33.8" height="39.5" rx="1.5" fill="#0e0e0e" opacity=".75"/><rect x="769.9" y="484.6" width="31.8" height="37.5" rx="1" fill="#303030"/><rect x="769.9" y="484.6" width="31.8" height="2.1" rx="1" fill="#6e4424"/><rect x="771.4" y="485.2" width="1.6" height="1.2" fill="#e8d8b0" opacity=".8"/><rect x="772.4" y="490.1" width="26.8" height="1.1" fill="#444"/><rect x="770.5" y="489.8" width="1.5" height="1.5" fill="#bdbdbd"/><rect x="772.4" y="493.4" width="26.8" height="1.1" fill="#444"/><rect x="770.5" y="493.1" width="1.5" height="1.5" fill="#bdbdbd"/><rect x="799.6" y="493.1" width="1.5" height="1.5" fill="#bdbdbd"/><rect x="772.4" y="496.7" width="26.8" height="1.1" fill="#3e3e3e"/><rect x="772.4" y="500.0" width="26.8" height="1.1" fill="#474747"/><rect x="770.5" y="499.7" width="1.5" height="1.5" fill="#bdbdbd"/><rect x="772.4" y="503.3" width="26.8" height="1.1" fill="#474747"/><rect x="770.5" y="503.0" width="1.5" height="1.5" fill="#bdbdbd"/><rect x="772.4" y="506.6" width="26.8" height="1.1" fill="#474747"/><rect x="770.5" y="506.3" width="1.5" height="1.5" fill="#bdbdbd"/><rect x="772.4" y="509.9" width="26.8" height="1.1" fill="#3e3e3e"/><rect x="772.4" y="513.2" width="26.8" height="1.1" fill="#474747"/><rect x="770.5" y="512.9" width="1.5" height="1.5" fill="#bdbdbd"/><rect x="772.4" y="516.5" width="26.8" height="1.1" fill="#444"/><rect x="772.4" y="519.8" width="26.8" height="1.1" fill="#3e3e3e"/><rect x="874.9" y="494.2" width="20.4" height="18.0" rx="1.5" fill="#0e0e0e" opacity=".75"/><rect x="875.9" y="494.7" width="18.4" height="16.0" rx="1" fill="#303030"/><rect x="875.9" y="494.7" width="18.4" height="2.1" rx="1" fill="#262626"/><rect x="878.4" y="500.2" width="13.4" height="1.1" fill="#3e3e3e"/><rect x="876.5" y="499.9" width="1.5" height="1.5" fill="#bdbdbd"/><rect x="878.4" y="503.5" width="13.4" height="1.1" fill="#3e3e3e"/><rect x="876.5" y="503.2" width="1.5" height="1.5" fill="#bdbdbd"/><rect x="878.4" y="506.8" width="13.4" height="1.1" fill="#3e3e3e"/><rect x="876.5" y="506.5" width="1.5" height="1.5" fill="#bdbdbd"/><rect x="892.2" y="506.5" width="1.5" height="1.5" fill="#bdbdbd"/><rect x="814.2" y="506.0" width="33.3" height="30.5" rx="1.5" fill="#0e0e0e" opacity=".75"/><rect x="815.2" y="506.5" width="31.3" height="28.5" rx="1" fill="#303030"/><rect x="815.2" y="506.5" width="31.3" height="2.1" rx="1" fill="#28586c"/><rect x="816.7" y="507.1" width="1.6" height="1.2" fill="#e8d8b0" opacity=".8"/><rect x="817.7" y="512.0" width="26.3" height="1.1" fill="#444"/><rect x="815.8" y="511.7" width="1.5" height="1.5" fill="#bdbdbd"/><rect x="844.4" y="511.7" width="1.5" height="1.5" fill="#bdbdbd"/><rect x="817.7" y="515.3" width="26.3" height="1.1" fill="#3e3e3e"/><rect x="815.8" y="515.0" width="1.5" height="1.5" fill="#bdbdbd"/><rect x="844.4" y="515.0" width="1.5" height="1.5" fill="#bdbdbd"/><rect x="817.7" y="518.6" width="26.3" height="1.1" fill="#444"/><rect x="815.8" y="518.3" width="1.5" height="1.5" fill="#bdbdbd"/><rect x="817.7" y="521.9" width="26.3" height="1.1" fill="#3e3e3e"/><rect x="815.8" y="521.6" width="1.5" height="1.5" fill="#bdbdbd"/><rect x="817.7" y="525.2" width="26.3" height="1.1" fill="#474747"/><rect x="817.7" y="528.5" width="26.3" height="1.1" fill="#3e3e3e"/><rect x="815.8" y="528.2" width="1.5" height="1.5" fill="#bdbdbd"/><rect x="817.7" y="531.8" width="26.3" height="1.1" fill="#444"/><rect x="815.8" y="531.5" width="1.5" height="1.5" fill="#bdbdbd"/><rect x="629.0" y="509.3" width="34.0" height="39.4" rx="1.5" fill="#0e0e0e" opacity=".75"/><rect x="630.0" y="509.8" width="32.0" height="37.4" rx="1" fill="#303030"/><rect x="630.0" y="509.8" width="32.0" height="2.1" rx="1" fill="#6e4424"/><rect x="631.5" y="510.4" width="1.6" height="1.2" fill="#e8d8b0" opacity=".8"/><rect x="632.5" y="515.3" width="27.0" height="1.1" fill="#444"/><rect x="659.9" y="515.0" width="1.5" height="1.5" fill="#bdbdbd"/><rect x="632.5" y="518.6" width="27.0" height="1.1" fill="#444"/><rect x="630.6" y="518.3" width="1.5" height="1.5" fill="#bdbdbd"/><rect x="659.9" y="518.3" width="1.5" height="1.5" fill="#bdbdbd"/><rect x="632.5" y="521.9" width="27.0" height="1.1" fill="#444"/><rect x="630.6" y="521.6" width="1.5" height="1.5" fill="#bdbdbd"/><rect x="659.9" y="521.6" width="1.5" height="1.5" fill="#bdbdbd"/><rect x="632.5" y="525.2" width="27.0" height="1.1" fill="#3e3e3e"/><rect x="630.6" y="524.9" width="1.5" height="1.5" fill="#bdbdbd"/><rect x="632.5" y="528.5" width="27.0" height="1.1" fill="#444"/><rect x="630.6" y="528.2" width="1.5" height="1.5" fill="#bdbdbd"/><rect x="632.5" y="531.8" width="27.0" height="1.1" fill="#3e3e3e"/><rect x="632.5" y="535.1" width="27.0" height="1.1" fill="#3e3e3e"/><rect x="630.6" y="534.8" width="1.5" height="1.5" fill="#bdbdbd"/><rect x="632.5" y="538.4" width="27.0" height="1.1" fill="#444"/><rect x="630.6" y="538.1" width="1.5" height="1.5" fill="#bdbdbd"/><rect x="632.5" y="541.7" width="27.0" height="1.1" fill="#474747"/><rect x="630.6" y="541.4" width="1.5" height="1.5" fill="#bdbdbd"/><rect x="632.5" y="545.0" width="27.0" height="1.1" fill="#444"/><rect x="630.6" y="544.7" width="1.5" height="1.5" fill="#bdbdbd"/><rect x="673.3" y="514.7" width="34.0" height="38.7" rx="1.5" fill="#0e0e0e" opacity=".75"/><rect x="674.3" y="515.2" width="32.0" height="36.7" rx="1" fill="#303030"/><rect x="674.3" y="515.2" width="32.0" height="2.1" rx="1" fill="#6e4424"/><rect x="675.8" y="515.8" width="1.6" height="1.2" fill="#e8d8b0" opacity=".8"/><rect x="676.8" y="520.7" width="27.0" height="1.1" fill="#3e3e3e"/><rect x="704.2" y="520.4" width="1.5" height="1.5" fill="#bdbdbd"/><rect x="676.8" y="524.0" width="27.0" height="1.1" fill="#444"/><rect x="674.9" y="523.7" width="1.5" height="1.5" fill="#bdbdbd"/><rect x="704.2" y="523.7" width="1.5" height="1.5" fill="#bdbdbd"/><rect x="676.8" y="527.3" width="27.0" height="1.1" fill="#444"/><rect x="674.9" y="527.0" width="1.5" height="1.5" fill="#bdbdbd"/><rect x="704.2" y="527.0" width="1.5" height="1.5" fill="#bdbdbd"/><rect x="676.8" y="530.6" width="27.0" height="1.1" fill="#3e3e3e"/><rect x="674.9" y="530.3" width="1.5" height="1.5" fill="#bdbdbd"/><rect x="676.8" y="533.9" width="27.0" height="1.1" fill="#3e3e3e"/><rect x="674.9" y="533.6" width="1.5" height="1.5" fill="#bdbdbd"/><rect x="676.8" y="537.2" width="27.0" height="1.1" fill="#444"/><rect x="674.9" y="536.9" width="1.5" height="1.5" fill="#bdbdbd"/><rect x="676.8" y="540.5" width="27.0" height="1.1" fill="#3e3e3e"/><rect x="674.9" y="540.2" width="1.5" height="1.5" fill="#bdbdbd"/><rect x="676.8" y="543.8" width="27.0" height="1.1" fill="#3e3e3e"/><rect x="676.8" y="547.1" width="27.0" height="1.1" fill="#3e3e3e"/><rect x="674.9" y="546.8" width="1.5" height="1.5" fill="#bdbdbd"/><rect x="539.9" y="534.5" width="20.5" height="33.4" rx="1.5" fill="#0e0e0e" opacity=".75"/><rect x="540.9" y="535.0" width="18.5" height="31.4" rx="1" fill="#303030"/><rect x="540.9" y="535.0" width="18.5" height="2.1" rx="1" fill="#6e2c41"/><rect x="542.4" y="535.6" width="1.6" height="1.2" fill="#e8d8b0" opacity=".8"/><rect x="543.4" y="540.5" width="13.5" height="1.1" fill="#3e3e3e"/><rect x="541.5" y="540.2" width="1.5" height="1.5" fill="#bdbdbd"/><rect x="543.4" y="543.8" width="13.5" height="1.1" fill="#444"/><rect x="557.3" y="543.5" width="1.5" height="1.5" fill="#bdbdbd"/><rect x="543.4" y="547.1" width="13.5" height="1.1" fill="#444"/><rect x="541.5" y="546.8" width="1.5" height="1.5" fill="#bdbdbd"/><rect x="543.4" y="550.4" width="13.5" height="1.1" fill="#474747"/><rect x="541.5" y="550.1" width="1.5" height="1.5" fill="#bdbdbd"/><rect x="543.4" y="553.7" width="13.5" height="1.1" fill="#444"/><rect x="541.5" y="553.4" width="1.5" height="1.5" fill="#bdbdbd"/><rect x="543.4" y="557.0" width="13.5" height="1.1" fill="#444"/><rect x="541.5" y="556.7" width="1.5" height="1.5" fill="#bdbdbd"/><rect x="543.4" y="560.3" width="13.5" height="1.1" fill="#444"/><rect x="541.5" y="560.0" width="1.5" height="1.5" fill="#bdbdbd"/><rect x="543.4" y="563.6" width="13.5" height="1.1" fill="#3e3e3e"/><rect x="718.3" y="545.5" width="19.1" height="14.6" rx="1.5" fill="#0e0e0e" opacity=".75"/><rect x="719.3" y="546.0" width="17.1" height="12.6" rx="1" fill="#303030"/><rect x="719.3" y="546.0" width="17.1" height="2.1" rx="1" fill="#625e24"/><rect x="720.8" y="546.6" width="1.6" height="1.2" fill="#e8d8b0" opacity=".8"/><rect x="721.8" y="551.5" width="12.1" height="1.1" fill="#474747"/><rect x="719.9" y="551.2" width="1.5" height="1.5" fill="#bdbdbd"/><rect x="721.8" y="554.8" width="12.1" height="1.1" fill="#474747"/><rect x="719.9" y="554.5" width="1.5" height="1.5" fill="#bdbdbd"/><rect x="746.5" y="544.2" width="20.0" height="24.7" rx="1.5" fill="#0e0e0e" opacity=".75"/><rect x="747.5" y="544.7" width="18.0" height="22.7" rx="1" fill="#303030"/><rect x="747.5" y="544.7" width="18.0" height="2.1" rx="1" fill="#625e24"/><rect x="749.0" y="545.3" width="1.6" height="1.2" fill="#e8d8b0" opacity=".8"/><rect x="750.0" y="550.2" width="13.0" height="1.1" fill="#474747"/><rect x="763.4" y="549.9" width="1.5" height="1.5" fill="#bdbdbd"/><rect x="750.0" y="553.5" width="13.0" height="1.1" fill="#474747"/><rect x="763.4" y="553.2" width="1.5" height="1.5" fill="#bdbdbd"/><rect x="750.0" y="556.8" width="13.0" height="1.1" fill="#474747"/><rect x="748.1" y="556.5" width="1.5" height="1.5" fill="#bdbdbd"/><rect x="750.0" y="560.1" width="13.0" height="1.1" fill="#444"/><rect x="748.1" y="559.8" width="1.5" height="1.5" fill="#bdbdbd"/><rect x="750.0" y="563.4" width="13.0" height="1.1" fill="#3e3e3e"/><rect x="748.1" y="563.1" width="1.5" height="1.5" fill="#bdbdbd"/><rect x="784.9" y="535.4" width="20.3" height="24.7" rx="1.5" fill="#0e0e0e" opacity=".75"/><rect x="785.9" y="535.9" width="18.3" height="22.7" rx="1" fill="#303030"/><rect x="785.9" y="535.9" width="18.3" height="2.1" rx="1" fill="#625e24"/><rect x="787.4" y="536.5" width="1.6" height="1.2" fill="#e8d8b0" opacity=".8"/><rect x="788.4" y="541.4" width="13.3" height="1.1" fill="#444"/><rect x="786.5" y="541.1" width="1.5" height="1.5" fill="#bdbdbd"/><rect x="802.1" y="541.1" width="1.5" height="1.5" fill="#bdbdbd"/><rect x="788.4" y="544.7" width="13.3" height="1.1" fill="#444"/><rect x="786.5" y="544.4" width="1.5" height="1.5" fill="#bdbdbd"/><rect x="802.1" y="544.4" width="1.5" height="1.5" fill="#bdbdbd"/><rect x="788.4" y="548.0" width="13.3" height="1.1" fill="#3e3e3e"/><rect x="786.5" y="547.7" width="1.5" height="1.5" fill="#bdbdbd"/><rect x="802.1" y="547.7" width="1.5" height="1.5" fill="#bdbdbd"/><rect x="788.4" y="551.3" width="13.3" height="1.1" fill="#3e3e3e"/><rect x="786.5" y="551.0" width="1.5" height="1.5" fill="#bdbdbd"/><rect x="788.4" y="554.6" width="13.3" height="1.1" fill="#3e3e3e"/><rect x="786.5" y="554.3" width="1.5" height="1.5" fill="#bdbdbd"/><rect x="861.0" y="537.5" width="19.3" height="24.3" rx="1.5" fill="#0e0e0e" opacity=".75"/><rect x="862.0" y="538.0" width="17.3" height="22.3" rx="1" fill="#303030"/><rect x="862.0" y="538.0" width="17.3" height="2.1" rx="1" fill="#625e24"/><rect x="863.5" y="538.6" width="1.6" height="1.2" fill="#e8d8b0" opacity=".8"/><rect x="864.5" y="543.5" width="12.3" height="1.1" fill="#3e3e3e"/><rect x="862.6" y="543.2" width="1.5" height="1.5" fill="#bdbdbd"/><rect x="877.2" y="543.2" width="1.5" height="1.5" fill="#bdbdbd"/><rect x="864.5" y="546.8" width="12.3" height="1.1" fill="#444"/><rect x="877.2" y="546.5" width="1.5" height="1.5" fill="#bdbdbd"/><rect x="864.5" y="550.1" width="12.3" height="1.1" fill="#444"/><rect x="862.6" y="549.8" width="1.5" height="1.5" fill="#bdbdbd"/><rect x="864.5" y="553.4" width="12.3" height="1.1" fill="#444"/><rect x="864.5" y="556.7" width="12.3" height="1.1" fill="#3e3e3e"/><rect x="862.6" y="556.4" width="1.5" height="1.5" fill="#bdbdbd"/><rect x="893.0" y="538.3" width="33.4" height="92.9" rx="1.5" fill="#0e0e0e" opacity=".75"/><rect x="894.0" y="538.8" width="31.4" height="90.9" rx="1" fill="#303030"/><rect x="894.0" y="538.8" width="31.4" height="2.1" rx="1" fill="#2b6e3f"/><rect x="895.5" y="539.4" width="1.6" height="1.2" fill="#e8d8b0" opacity=".8"/><rect x="896.5" y="544.3" width="26.4" height="1.1" fill="#474747"/><rect x="896.5" y="547.6" width="26.4" height="1.1" fill="#3e3e3e"/><rect x="894.6" y="547.3" width="1.5" height="1.5" fill="#bdbdbd"/><rect x="923.3" y="547.3" width="1.5" height="1.5" fill="#bdbdbd"/><rect x="896.5" y="550.9" width="26.4" height="1.1" fill="#474747"/><rect x="923.3" y="550.6" width="1.5" height="1.5" fill="#bdbdbd"/><rect x="896.5" y="554.2" width="26.4" height="1.1" fill="#474747"/><rect x="896.5" y="557.5" width="26.4" height="1.1" fill="#3e3e3e"/><rect x="894.6" y="557.2" width="1.5" height="1.5" fill="#bdbdbd"/><rect x="896.5" y="560.8" width="26.4" height="1.1" fill="#474747"/><rect x="894.6" y="560.5" width="1.5" height="1.5" fill="#bdbdbd"/><rect x="896.5" y="564.1" width="26.4" height="1.1" fill="#474747"/><rect x="894.6" y="563.8" width="1.5" height="1.5" fill="#bdbdbd"/><rect x="896.5" y="567.4" width="26.4" height="1.1" fill="#3e3e3e"/><rect x="894.6" y="567.1" width="1.5" height="1.5" fill="#bdbdbd"/><rect x="896.5" y="570.7" width="26.4" height="1.1" fill="#474747"/><rect x="894.6" y="570.4" width="1.5" height="1.5" fill="#bdbdbd"/><rect x="896.5" y="574.0" width="26.4" height="1.1" fill="#3e3e3e"/><rect x="894.6" y="573.7" width="1.5" height="1.5" fill="#bdbdbd"/><rect x="896.5" y="577.3" width="26.4" height="1.1" fill="#444"/><rect x="894.6" y="577.0" width="1.5" height="1.5" fill="#bdbdbd"/><rect x="896.5" y="580.6" width="26.4" height="1.1" fill="#474747"/><rect x="894.6" y="580.3" width="1.5" height="1.5" fill="#bdbdbd"/><rect x="896.5" y="583.9" width="26.4" height="1.1" fill="#444"/><rect x="894.6" y="583.6" width="1.5" height="1.5" fill="#bdbdbd"/><rect x="896.5" y="587.2" width="26.4" height="1.1" fill="#474747"/><rect x="894.6" y="586.9" width="1.5" height="1.5" fill="#bdbdbd"/><rect x="896.5" y="590.5" width="26.4" height="1.1" fill="#474747"/><rect x="894.6" y="590.2" width="1.5" height="1.5" fill="#bdbdbd"/><rect x="896.5" y="593.8" width="26.4" height="1.1" fill="#474747"/><rect x="894.6" y="593.5" width="1.5" height="1.5" fill="#bdbdbd"/><rect x="896.5" y="597.1" width="26.4" height="1.1" fill="#3e3e3e"/><rect x="896.5" y="600.4" width="26.4" height="1.1" fill="#474747"/><rect x="896.5" y="603.7" width="26.4" height="1.1" fill="#474747"/><rect x="894.6" y="603.4" width="1.5" height="1.5" fill="#bdbdbd"/><rect x="896.5" y="607.0" width="26.4" height="1.1" fill="#444"/><rect x="896.5" y="610.3" width="26.4" height="1.1" fill="#474747"/><rect x="896.5" y="613.6" width="26.4" height="1.1" fill="#474747"/><rect x="894.6" y="613.3" width="1.5" height="1.5" fill="#bdbdbd"/><rect x="896.5" y="616.9" width="26.4" height="1.1" fill="#444"/><rect x="894.6" y="616.6" width="1.5" height="1.5" fill="#bdbdbd"/><rect x="896.5" y="620.2" width="26.4" height="1.1" fill="#474747"/><rect x="894.6" y="619.9" width="1.5" height="1.5" fill="#bdbdbd"/><rect x="896.5" y="623.5" width="26.4" height="1.1" fill="#474747"/><rect x="896.5" y="626.8" width="26.4" height="1.1" fill="#474747"/><rect x="894.6" y="626.5" width="1.5" height="1.5" fill="#bdbdbd"/><rect x="930.0" y="543.5" width="21.6" height="18.6" rx="1.5" fill="#0e0e0e" opacity=".75"/><rect x="931.0" y="544.0" width="19.6" height="16.6" rx="1" fill="#303030"/><rect x="931.0" y="544.0" width="19.6" height="2.1" rx="1" fill="#6e2c41"/><rect x="932.5" y="544.6" width="1.6" height="1.2" fill="#e8d8b0" opacity=".8"/><rect x="933.5" y="549.5" width="14.6" height="1.1" fill="#474747"/><rect x="931.6" y="549.2" width="1.5" height="1.5" fill="#bdbdbd"/><rect x="933.5" y="552.8" width="14.6" height="1.1" fill="#444"/><rect x="931.6" y="552.5" width="1.5" height="1.5" fill="#bdbdbd"/><rect x="948.5" y="552.5" width="1.5" height="1.5" fill="#bdbdbd"/><rect x="933.5" y="556.1" width="14.6" height="1.1" fill="#3e3e3e"/><rect x="931.6" y="555.8" width="1.5" height="1.5" fill="#bdbdbd"/><rect x="948.5" y="555.8" width="1.5" height="1.5" fill="#bdbdbd"/><rect x="582.2" y="563.5" width="22.8" height="41.4" rx="1.5" fill="#0e0e0e" opacity=".75"/><rect x="583.2" y="564.0" width="20.8" height="39.4" rx="1" fill="#303030"/><rect x="583.2" y="564.0" width="20.8" height="2.1" rx="1" fill="#44448a"/><rect x="584.7" y="564.6" width="1.6" height="1.2" fill="#e8d8b0" opacity=".8"/><rect x="585.7" y="569.5" width="15.8" height="1.1" fill="#3e3e3e"/><rect x="601.9" y="569.2" width="1.5" height="1.5" fill="#bdbdbd"/><rect x="585.7" y="572.8" width="15.8" height="1.1" fill="#3e3e3e"/><rect x="583.8" y="572.5" width="1.5" height="1.5" fill="#bdbdbd"/><rect x="585.7" y="576.1" width="15.8" height="1.1" fill="#3e3e3e"/><rect x="583.8" y="575.8" width="1.5" height="1.5" fill="#bdbdbd"/><rect x="601.9" y="575.8" width="1.5" height="1.5" fill="#bdbdbd"/><rect x="585.7" y="579.4" width="15.8" height="1.1" fill="#444"/><rect x="585.7" y="582.7" width="15.8" height="1.1" fill="#474747"/><rect x="583.8" y="582.4" width="1.5" height="1.5" fill="#bdbdbd"/><rect x="585.7" y="586.0" width="15.8" height="1.1" fill="#474747"/><rect x="583.8" y="585.7" width="1.5" height="1.5" fill="#bdbdbd"/><rect x="585.7" y="589.3" width="15.8" height="1.1" fill="#444"/><rect x="585.7" y="592.6" width="15.8" height="1.1" fill="#444"/><rect x="583.8" y="592.3" width="1.5" height="1.5" fill="#bdbdbd"/><rect x="585.7" y="595.9" width="15.8" height="1.1" fill="#474747"/><rect x="585.7" y="599.2" width="15.8" height="1.1" fill="#3e3e3e"/><rect x="583.8" y="598.9" width="1.5" height="1.5" fill="#bdbdbd"/><rect x="552.6" y="577.0" width="20.4" height="12.7" rx="1.5" fill="#0e0e0e" opacity=".75"/><rect x="553.6" y="577.5" width="18.4" height="10.7" rx="1" fill="#303030"/><rect x="553.6" y="577.5" width="18.4" height="2.1" rx="1" fill="#6e2c41"/><rect x="555.1" y="578.1" width="1.6" height="1.2" fill="#e8d8b0" opacity=".8"/><rect x="556.1" y="583.0" width="13.4" height="1.1" fill="#444"/><rect x="554.2" y="582.7" width="1.5" height="1.5" fill="#bdbdbd"/><rect x="620.0" y="555.8" width="34.0" height="40.0" rx="1.5" fill="#0e0e0e" opacity=".75"/><rect x="621.0" y="556.3" width="32.0" height="38.0" rx="1" fill="#303030"/><rect x="621.0" y="556.3" width="32.0" height="2.1" rx="1" fill="#6e4424"/><rect x="622.5" y="556.9" width="1.6" height="1.2" fill="#e8d8b0" opacity=".8"/><rect x="623.5" y="561.8" width="27.0" height="1.1" fill="#3e3e3e"/><rect x="650.9" y="561.5" width="1.5" height="1.5" fill="#bdbdbd"/><rect x="623.5" y="565.1" width="27.0" height="1.1" fill="#474747"/><rect x="621.6" y="564.8" width="1.5" height="1.5" fill="#bdbdbd"/><rect x="650.9" y="564.8" width="1.5" height="1.5" fill="#bdbdbd"/><rect x="623.5" y="568.4" width="27.0" height="1.1" fill="#444"/><rect x="621.6" y="568.1" width="1.5" height="1.5" fill="#bdbdbd"/><rect x="623.5" y="571.7" width="27.0" height="1.1" fill="#474747"/><rect x="621.6" y="571.4" width="1.5" height="1.5" fill="#bdbdbd"/><rect x="623.5" y="575.0" width="27.0" height="1.1" fill="#474747"/><rect x="623.5" y="578.3" width="27.0" height="1.1" fill="#3e3e3e"/><rect x="623.5" y="581.6" width="27.0" height="1.1" fill="#444"/><rect x="623.5" y="584.9" width="27.0" height="1.1" fill="#3e3e3e"/><rect x="621.6" y="584.6" width="1.5" height="1.5" fill="#bdbdbd"/><rect x="623.5" y="588.2" width="27.0" height="1.1" fill="#444"/><rect x="621.6" y="587.9" width="1.5" height="1.5" fill="#bdbdbd"/><rect x="623.5" y="591.5" width="27.0" height="1.1" fill="#444"/><rect x="667.0" y="563.5" width="20.6" height="24.6" rx="1.5" fill="#0e0e0e" opacity=".75"/><rect x="668.0" y="564.0" width="18.6" height="22.6" rx="1" fill="#303030"/><rect x="668.0" y="564.0" width="18.6" height="2.1" rx="1" fill="#625e24"/><rect x="669.5" y="564.6" width="1.6" height="1.2" fill="#e8d8b0" opacity=".8"/><rect x="670.5" y="569.5" width="13.6" height="1.1" fill="#444"/><rect x="684.5" y="569.2" width="1.5" height="1.5" fill="#bdbdbd"/><rect x="670.5" y="572.8" width="13.6" height="1.1" fill="#444"/><rect x="668.6" y="572.5" width="1.5" height="1.5" fill="#bdbdbd"/><rect x="684.5" y="572.5" width="1.5" height="1.5" fill="#bdbdbd"/><rect x="670.5" y="576.1" width="13.6" height="1.1" fill="#444"/><rect x="684.5" y="575.8" width="1.5" height="1.5" fill="#bdbdbd"/><rect x="670.5" y="579.4" width="13.6" height="1.1" fill="#474747"/><rect x="670.5" y="582.7" width="13.6" height="1.1" fill="#474747"/><rect x="668.6" y="582.4" width="1.5" height="1.5" fill="#bdbdbd"/><rect x="677.0" y="603.2" width="20.7" height="21.9" rx="1.5" fill="#0e0e0e" opacity=".75"/><rect x="678.0" y="603.7" width="18.7" height="19.9" rx="1" fill="#303030"/><rect x="678.0" y="603.7" width="18.7" height="2.1" rx="1" fill="#44448a"/><rect x="679.5" y="604.3" width="1.6" height="1.2" fill="#e8d8b0" opacity=".8"/><rect x="680.5" y="609.2" width="13.7" height="1.1" fill="#444"/><rect x="678.6" y="608.9" width="1.5" height="1.5" fill="#bdbdbd"/><rect x="680.5" y="612.5" width="13.7" height="1.1" fill="#474747"/><rect x="694.6" y="612.2" width="1.5" height="1.5" fill="#bdbdbd"/><rect x="680.5" y="615.8" width="13.7" height="1.1" fill="#474747"/><rect x="678.6" y="615.5" width="1.5" height="1.5" fill="#bdbdbd"/><rect x="694.6" y="615.5" width="1.5" height="1.5" fill="#bdbdbd"/><rect x="680.5" y="619.1" width="13.7" height="1.1" fill="#3e3e3e"/><rect x="636.0" y="613.3" width="34.0" height="40.4" rx="1.5" fill="#0e0e0e" opacity=".75"/><rect x="637.0" y="613.8" width="32.0" height="38.4" rx="1" fill="#303030"/><rect x="637.0" y="613.8" width="32.0" height="2.1" rx="1" fill="#6e4424"/><rect x="638.5" y="614.4" width="1.6" height="1.2" fill="#e8d8b0" opacity=".8"/><rect x="639.5" y="619.3" width="27.0" height="1.1" fill="#3e3e3e"/><rect x="637.6" y="619.0" width="1.5" height="1.5" fill="#bdbdbd"/><rect x="639.5" y="622.6" width="27.0" height="1.1" fill="#474747"/><rect x="666.9" y="622.3" width="1.5" height="1.5" fill="#bdbdbd"/><rect x="639.5" y="625.9" width="27.0" height="1.1" fill="#444"/><rect x="666.9" y="625.6" width="1.5" height="1.5" fill="#bdbdbd"/><rect x="639.5" y="629.2" width="27.0" height="1.1" fill="#444"/><rect x="637.6" y="628.9" width="1.5" height="1.5" fill="#bdbdbd"/><rect x="639.5" y="632.5" width="27.0" height="1.1" fill="#444"/><rect x="637.6" y="632.2" width="1.5" height="1.5" fill="#bdbdbd"/><rect x="639.5" y="635.8" width="27.0" height="1.1" fill="#3e3e3e"/><rect x="639.5" y="639.1" width="27.0" height="1.1" fill="#474747"/><rect x="639.5" y="642.4" width="27.0" height="1.1" fill="#474747"/><rect x="639.5" y="645.7" width="27.0" height="1.1" fill="#444"/><rect x="637.6" y="645.4" width="1.5" height="1.5" fill="#bdbdbd"/><rect x="639.5" y="649.0" width="27.0" height="1.1" fill="#444"/><rect x="669.6" y="470.8" width="28.6" height="2.6" fill="#f2f2f2"/><rect x="665" y="480" width="38.3" height="1.3" fill="#e8e8e8"/><rect x="819.9" y="520.8" width="21" height="2.8" fill="#f2f2f2"/><rect x="817.5" y="529" width="27" height="1.2" fill="#1a1a1a"/><rect x="897" y="574" width="26" height="1.3" fill="#4772b3"/><rect x="897" y="611" width="26" height="1.3" fill="#4772b3"/><rect x="909" y="563.500" width="14" height="1.3" fill="#e8e8e8"/><rect x="897" y="607.500" width="26" height="1.2" fill="#151515"/><rect x="721.5" y="553" width="13" height="1.3" fill="#4772b3"/><rect x="864.5" y="553.500" width="13" height="1.3" fill="#4772b3"/><rect x="670.5" y="579" width="13" height="1.3" fill="#4772b3"/><rect x="680.500" y="618" width="13" height="1.3" fill="#4772b3"/><rect x="931" y="544" width="19.6" height="16.6" fill="none" stroke="#f0f0f0" stroke-width="1.3"/><rect x="1122.500" y="437" width="2.500" height="141" rx="1.2" fill="#343434"/><rect x="383" y="680.500" width="733" height="2.500" rx="1.2" fill="#3c3c3c"/></svg>
<div class="dd" style="left:7.5px;top:3.3000000000000114px;width:31.500px;height:19px;border-radius:4px;background:#282828;border-color:#3d3d3d"></div>
<svg width="15" height="15" viewBox="0 0 15 15" style="left:11.5px;top:5px"><circle cx="7.500" cy="7.500" r="6.300" fill="none" stroke="#e0e0e0" stroke-width="1.200"/><path d="M3.800,7A4,4 0 0 1 6.500,3.800" fill="none" stroke="#e0e0e0" stroke-width="1.300"/><circle cx="8.300" cy="3.600" r=".8" fill="#e0e0e0"/></svg>
<svg width="8" height="6" viewBox="0 0 8 6" style="left:28.5px;top:10.5px"><path d="M1,1L4,4.2 7,1" fill="none" stroke="#e6e6e6" stroke-width="1.3" stroke-linecap="round" stroke-linejoin="round"/></svg>
<div class="dd" style="left:44.19999999999999px;top:3.3000000000000114px;width:88.500px;height:19px;border-radius:4px;background:#282828;border-color:#3d3d3d"></div>
<svg width="14" height="14" viewBox="0 0 14 14" style="left:49px;top:5.800000000000011px"><rect x="3.500" y="3.500" width="7" height="7" fill="#e0e0e0"/><path d="M0.600,4V0.600H4M10,0.600H13.400V4M13.400,10V13.400H10M4,13.400H0.600V10" fill="none" stroke="#e0e0e0" stroke-width="1.100"/></svg>
<div class="t" style="left:70.30000000000001px;top:5.8px;">Object</div>
<svg width="8" height="6" viewBox="0 0 8 6" style="left:122.5px;top:10.5px"><path d="M1,1L4,4.2 7,1" fill="none" stroke="#e6e6e6" stroke-width="1.3" stroke-linecap="round" stroke-linejoin="round"/></svg>
<div class="t" style="left:145.5px;top:5.8px;">View</div>
<div class="t" style="left:185.5px;top:5.8px;">Select</div>
<div class="t" style="left:231.20000000000005px;top:5.8px;">Add</div>
<div class="t" style="left:265.20000000000005px;top:5.8px;">Node</div>
<div class="a" style="left:305.20000000000005px;top:7px;width:12.6px;height:12.3px;background:#4772b3;border-radius:2.500px"></div>
<svg width="10" height="9" viewBox="0 0 10 9" style="left:306.5px;top:8.5px"><path d="M1.500,4.500L4,7 8.500,1.500" fill="none" stroke="#fff" stroke-width="1.600"/></svg>
<div class="t" style="left:321.5px;top:5.8px;">Use Nodes</div>
<div class="dd" style="left:407.70000000000005px;top:3.3000000000000114px;width:79px;height:19px;border-radius:4px;background:#282828;border-color:#3d3d3d"></div>
<div class="t" style="left:415.20000000000005px;top:5.8px;">Slot 2</div>
<svg width="8" height="6" viewBox="0 0 8 6" style="left:477px;top:10.5px"><path d="M1,1L4,4.2 7,1" fill="none" stroke="#e6e6e6" stroke-width="1.3" stroke-linecap="round" stroke-linejoin="round"/></svg>
<div class="dd" style="left:492.5px;top:3.3000000000000114px;width:31.500px;height:19px;border-radius:4px 0 0 4px;background:#282828;border-color:#3d3d3d"></div>
<svg width="15" height="15" viewBox="0 0 15 15" style="left:496.20000000000005px;top:5.300000000000011px"><circle cx="7.500" cy="7.500" r="6.500" fill="none" stroke="#e0e0e0" stroke-width="1.200"/><path d="M7.500,1A6.500,6.500 0 0 0 1,7.500H7.500Z" fill="#e0e0e0"/><path d="M7.500,14A6.500,6.500 0 0 0 14,7.500H7.500Z" fill="#e0e0e0"/></svg>
<svg width="8" height="6" viewBox="0 0 8 6" style="left:513.3px;top:10.5px"><path d="M1,1L4,4.2 7,1" fill="none" stroke="#e6e6e6" stroke-width="1.3" stroke-linecap="round" stroke-linejoin="round"/></svg>
<div class="fld" style="left:523.7px;top:3.3000000000000114px;width:120.500px;height:19px;border-radius:0;border-color:#333"></div>
<div class="t" style="left:530.6px;top:5.8px;">tissus</div>
<div class="a" style="left:643.9px;top:3.3000000000000114px;width:19.4px;height:19px;background:#4772b3;"></div>
<svg width="15" height="15" viewBox="0 0 15 15" style="left:646.2px;top:5.300000000000011px"><path d="M7.500,0.800L13.500,2.800V7.500C13.500,11 10.500,13.300 7.500,14.300C4.500,13.300 1.500,11 1.500,7.500V2.800Z" fill="#fff"/><path d="M4.500,7.500L6.800,9.800 10.800,5" fill="none" stroke="#4772b3" stroke-width="1.600"/></svg>
<div class="a" style="left:663.3px;top:3.3000000000000114px;width:20.3px;height:19px;background:#4b4b4b;"></div>
<svg width="14" height="14" viewBox="0 0 14 14" style="left:666.5px;top:6px"><path d="M4.500,3.500V1H10L13,4V10.500H9.500M9.500,4.500V13H1V3.500H8.500Z" fill="none" stroke="#e6e6e6" stroke-width="1.100" stroke-linejoin="round"/></svg>
<div class="a" style="left:684px;top:3.3000000000000114px;width:19.3px;height:19px;background:#4b4b4b;border-radius:0 4px 4px 0"></div>
<svg width="10" height="10" viewBox="0 0 10 10" style="left:688.7px;top:8px"><path d="M1,1L9,9M9,1L1,9" stroke="#e6e6e6" stroke-width="1.200" fill="none"/></svg>
<svg width="15" height="16" viewBox="0 0 15 16" style="left:711.5px;top:5px"><path d="M8.500,1.500L13.500,6.500 11.800,7 9.500,10.500 9,12.500 3,6.500 5,6 8.300,3.300Z M6,9.500L1.500,14.500" fill="none" stroke="#c0c0c0" stroke-width="1.100" stroke-linejoin="round"/></svg>
<div class="a" style="left:746px;top:4px;width:10px;height:18px;background:#3a3a3a;border-radius:4px 0 0 4px"></div>
<svg width="6" height="10" viewBox="0 0 6 10" style="left:1px;top:42px"><path d="M1,1L5,5 1,9" fill="none" stroke="#bbb" stroke-width="1.200"/></svg>
<svg width="14" height="14" viewBox="0 0 14 14" style="left:18px;top:40px"><rect x="3.500" y="3.500" width="7" height="7" fill="#e0e0e0"/><path d="M0.600,4V0.600H4M10,0.600H13.400V4M13.400,10V13.400H10M4,13.400H0.600V10" fill="none" stroke="#e0e0e0" stroke-width="1.100"/></svg>
<div class="t" style="left:41.5px;top:40.1px;">sol</div>
<svg width="6" height="10" viewBox="0 0 6 10" style="left:72px;top:42px"><path d="M1,1L5,5 1,9" fill="none" stroke="#d0d0d0" stroke-width="1.200"/></svg>
<svg width="15" height="15" viewBox="0 0 15 15" style="left:86.30000000000001px;top:39.5px"><g fill="none" stroke="#e0e0e0" stroke-width="1.100"><path d="M2.500,2.500H12.500L7.500,12.500Z"/><rect x="0.800" y="0.800" width="3.200" height="3.200" fill="#1d1d1d"/><rect x="11" y="0.800" width="3.200" height="3.200" fill="#1d1d1d"/><rect x="5.900" y="11" width="3.200" height="3.200" fill="#1d1d1d"/></g></svg>
<div class="t" style="left:110.39999999999998px;top:40.1px;">Plane<span class="dg">.001</span></div>
<svg width="6" height="10" viewBox="0 0 6 10" style="left:178px;top:42px"><path d="M1,1L5,5 1,9" fill="none" stroke="#d0d0d0" stroke-width="1.200"/></svg>
<svg width="15" height="15" viewBox="0 0 15 15" style="left:192.29999999999995px;top:39.5px"><circle cx="7.500" cy="7.500" r="6.500" fill="none" stroke="#e0e0e0" stroke-width="1.200"/><path d="M7.500,1A6.500,6.500 0 0 0 1,7.500H7.500Z" fill="#e0e0e0"/><path d="M7.500,14A6.500,6.500 0 0 0 14,7.500H7.500Z" fill="#e0e0e0"/></svg>
<div class="t" style="left:216px;top:40.1px;">tissus</div>
<svg width="6" height="10" viewBox="0 0 6 10" style="left:746px;top:42px"><path d="M5,1L1,5 5,9" fill="none" stroke="#bbb" stroke-width="1.200"/></svg>
</div>
<!-- ============ STATUS BAR ============ -->
<div class="a" id="sb" style="left:0;top:686px;width:1366px;height:19px;background:#1a1a1a">
<svg width="12" height="16" viewBox="0 0 12 16" style="left:12px;top:2.500px"><rect x="0.800" y="0.800" width="10.400" height="14" rx="3" fill="none" stroke="#c8c8c8" stroke-width="1.200"/><path d="M1,6.500V4A3,3 0 0 1 4,1H6V6.500Z" fill="#c8c8c8"/></svg>
<svg width="12" height="16" viewBox="0 0 12 16" style="left:222.500px;top:2.500px"><rect x="0.800" y="0.800" width="10.400" height="14" rx="3" fill="none" stroke="#c8c8c8" stroke-width="1.200"/><rect x="4.700" y="2.500" width="2.600" height="5.500" rx="1.200" fill="#c8c8c8"/></svg>
<div class="t" style="left:245.500px;top:3px;color:#b4b4b4">Pan View</div>
<svg width="12" height="16" viewBox="0 0 12 16" style="left:434.500px;top:2.500px"><rect x="0.800" y="0.800" width="10.400" height="14" rx="3" fill="none" stroke="#c8c8c8" stroke-width="1.200"/><path d="M11,6.500V4A3,3 0 0 0 8,1H6V6.500Z" fill="#c8c8c8"/></svg>
<div class="t" style="left:456px;top:3px;color:#b4b4b4">Sélectionner</div>
<div class="t" style="right:10px;top:3px;color:#b4b4b4">cam_light | sol | Verts:<span class="dg">2,764</span> | Faces:<span class="dg">2,585</span> | Tris:<span class="dg">5,254</span> | Objets:1/38 | Mémoire: <span class="dg">2.1</span> GiB | VRAM: <span class="dg">0.8/8.0</span> GiB | 3.3.0</div>
</div>
<!-- taskbar strip -->
<div class="a" id="tb" style="left:0;top:705px;width:1366px;height:8px;background:#0f141a">
<div class="a" style="left:48px;top:0.500px;width:344px;height:8px;background:#f1f1f1"></div>
<div class="a" style="left:589px;top:0.500px;width:48px;height:8px;background:#1c2633"></div>
</div>
</body>
</html>
